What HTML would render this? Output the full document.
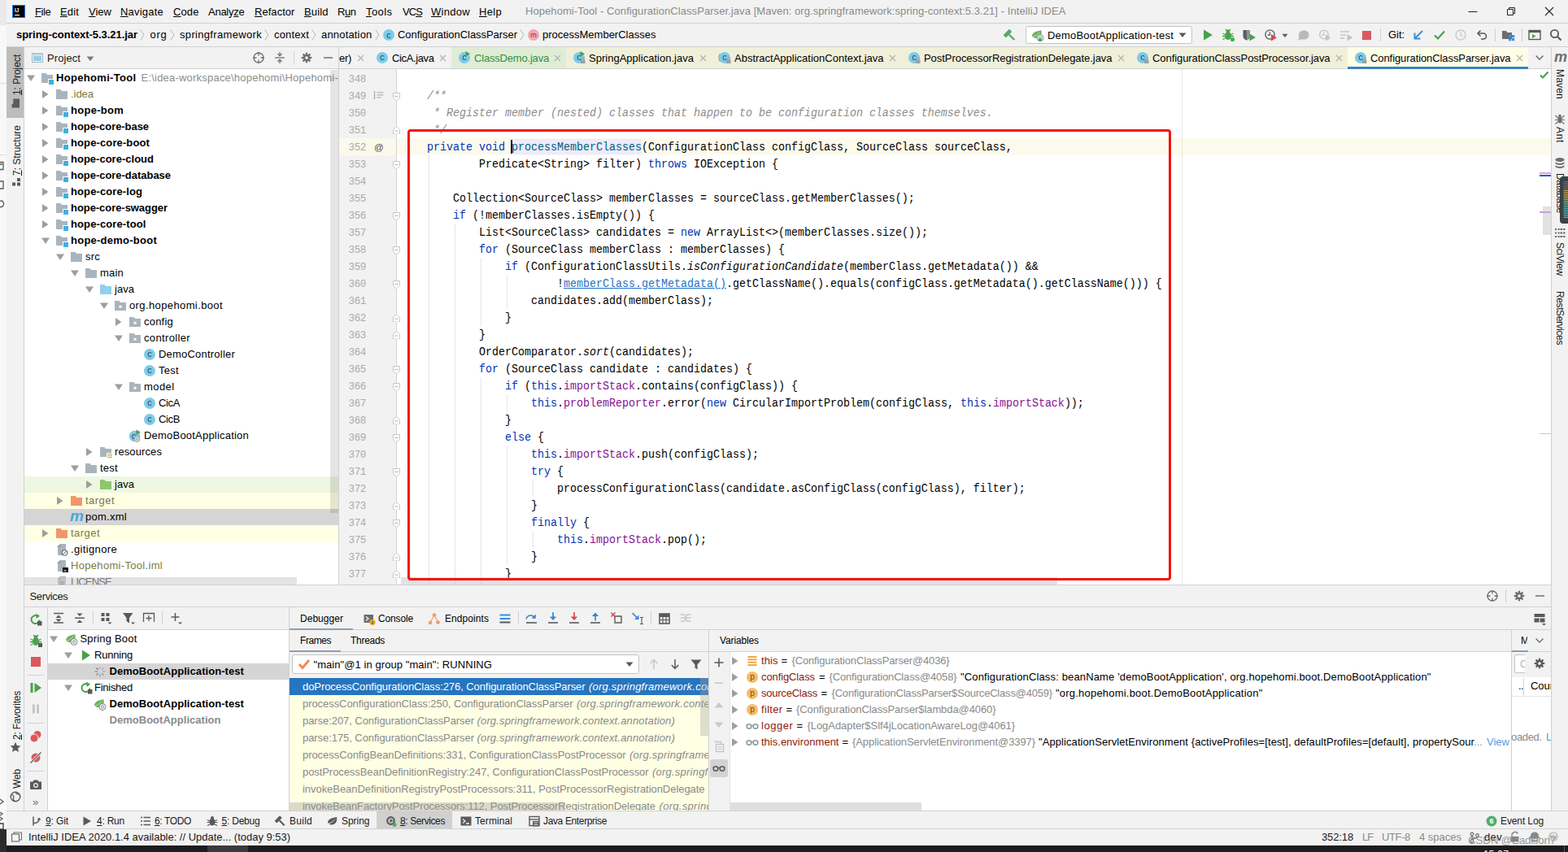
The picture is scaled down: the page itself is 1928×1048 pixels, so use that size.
<!DOCTYPE html>
<html lang="en"><head><meta charset="utf-8"><title>IntelliJ IDEA</title>
<style>
html,body{margin:0;padding:0;}
body{width:1928px;height:1048px;overflow:hidden;background:#f2f2f2;position:relative;
 font-family:"Liberation Sans","Noto Sans CJK SC",sans-serif;font-size:13px;color:#000;}
#r{position:absolute;left:0;top:0;width:1928px;height:1048px;overflow:hidden;}
#r div,#r span,#r svg,#r pre{position:absolute;}
#r span{white-space:pre;}
#r span span,#r pre span{position:static;}
.b{font-weight:bold;}
.i{font-style:italic;}
.m{font-family:"Liberation Mono",monospace;}
.u{text-decoration:underline;}
pre{margin:0;font-family:"Liberation Mono",monospace;font-size:13.333px;line-height:21px;white-space:pre;transform:scaleY(1.07);transform-origin:0 14px;}
.k{color:#0033b3;}
.f{color:#871094;}
.c{color:#8c8c8c;font-style:italic;}
</style></head>
<body><div id="r">
<div style="left:0px;top:0px;width:8px;height:31px;background:#e9e9e9;"></div>
<div style="left:0px;top:31px;width:8px;height:989px;background:#f8f8f8;"></div>
<div style="left:0px;top:102px;width:8px;height:1px;background:#dcdcdc;"></div>
<div style="left:0px;top:190px;width:8px;height:1px;background:#dcdcdc;"></div>
<div style="left:0px;top:1020px;width:8px;height:28px;background:#2b2b2b;"></div>
<div style="left:8px;top:0px;width:1920px;height:28px;background:#f2f2f2;"></div>
<div style="left:8px;top:28px;width:1920px;height:1px;background:#d1d1d1;"></div>
<div style="left:8px;top:29px;width:1920px;height:28px;background:#f2f2f2;"></div>
<div style="left:8px;top:57px;width:1920px;height:1px;background:#d1d1d1;"></div>
<div style="left:8px;top:58px;width:21px;height:940px;background:#f2f2f2;"></div>
<div style="left:29px;top:58px;width:1px;height:940px;background:#d1d1d1;"></div>
<div style="left:8px;top:58px;width:21px;height:87px;background:#bdbdbd;"></div>
<div style="left:30px;top:58px;width:386px;height:27px;background:#f2f2f2;"></div>
<div style="left:30px;top:84px;width:386px;height:1px;background:#d1d1d1;"></div>
<div style="left:30px;top:85px;width:386px;height:634px;background:#fff;"></div>
<div style="left:416px;top:58px;width:1px;height:660px;background:#d1d1d1;"></div>
<div style="left:417px;top:58px;width:1490px;height:26px;background:#f2f2f2;"></div>
<div style="left:417px;top:84px;width:1490px;height:1px;background:#d1d1d1;"></div>
<div style="left:417px;top:85px;width:1490px;height:634px;background:#fff;"></div>
<div style="left:417px;top:85px;width:71px;height:634px;background:#f2f2f2;"></div>
<div style="left:487px;top:85px;width:1px;height:634px;background:#dedede;"></div>
<div style="left:1907px;top:58px;width:21px;height:940px;background:#f2f2f2;"></div>
<div style="left:1907px;top:58px;width:1px;height:940px;background:#d1d1d1;"></div>
<div style="left:30px;top:719px;width:1877px;height:1px;background:#d1d1d1;"></div>
<div style="left:30px;top:719px;width:1877px;height:27px;background:#f2f2f2;"></div>
<div style="left:30px;top:746px;width:1877px;height:1px;background:#d1d1d1;"></div>
<div style="left:30px;top:747px;width:28px;height:251px;background:#f2f2f2;"></div>
<div style="left:58px;top:747px;width:1px;height:251px;background:#d1d1d1;"></div>
<div style="left:59px;top:747px;width:296px;height:27px;background:#f2f2f2;"></div>
<div style="left:59px;top:774px;width:296px;height:1px;background:#d1d1d1;"></div>
<div style="left:59px;top:775px;width:296px;height:222px;background:#fff;"></div>
<div style="left:355px;top:747px;width:1px;height:251px;background:#d1d1d1;"></div>
<div style="left:356px;top:747px;width:1551px;height:27px;background:#f2f2f2;"></div>
<div style="left:356px;top:774px;width:1551px;height:1px;background:#d1d1d1;"></div>
<div style="left:356px;top:775px;width:1551px;height:26px;background:#f2f2f2;"></div>
<div style="left:356px;top:801px;width:1551px;height:1px;background:#d1d1d1;"></div>
<div style="left:356px;top:802px;width:515px;height:32px;background:#f2f2f2;"></div>
<div style="left:356px;top:834px;width:515px;height:163px;background:#ffffe4;"></div>
<div style="left:871px;top:775px;width:1px;height:222px;background:#d1d1d1;"></div>
<div style="left:872px;top:802px;width:25px;height:195px;background:#f2f2f2;"></div>
<div style="left:897px;top:802px;width:1px;height:195px;background:#e3e3e3;"></div>
<div style="left:898px;top:802px;width:960px;height:195px;background:#fff;"></div>
<div style="left:1858px;top:775px;width:1px;height:222px;background:#d1d1d1;"></div>
<div style="left:1859px;top:802px;width:48px;height:195px;background:#fff;"></div>
<div style="left:1859px;top:802px;width:48px;height:31px;background:#f2f2f2;"></div>
<div style="left:8px;top:997px;width:1920px;height:1px;background:#d1d1d1;"></div>
<div style="left:8px;top:998px;width:1920px;height:21px;background:#f2f2f2;"></div>
<div style="left:8px;top:1019px;width:1920px;height:1px;background:#d1d1d1;"></div>
<div style="left:8px;top:1020px;width:1920px;height:20px;background:#f2f2f2;"></div>
<div style="left:0px;top:1040px;width:1928px;height:8px;background:#1c1c1c;"></div>
<div style="left:255px;top:1040px;width:50px;height:8px;background:#3a3a3a;"></div>
<div style="left:15px;top:6px;width:16px;height:16px;background:#000;border:1px solid #087cfa;box-sizing:border-box;"></div>
<svg style="left:15px;top:6px;" width="16" height="16" viewBox="0 0 16 16"><text x="3" y="8.500" font-family="Liberation Sans,sans-serif" font-size="6.500" font-weight="bold" fill="#fff">IJ</text><rect x="3" y="12" width="6" height="1.200" fill="#fff"/></svg>
<span style="left:43px;top:5.5px;line-height:18px;letter-spacing:-0.367px;"><span class="u">F</span>ile</span>
<span style="left:74px;top:5.5px;line-height:18px;letter-spacing:0.148px;"><span class="u">E</span>dit</span>
<span style="left:109px;top:5.5px;line-height:18px;letter-spacing:0.012px;"><span class="u">V</span>iew</span>
<span style="left:148px;top:5.5px;line-height:18px;letter-spacing:0.211px;"><span class="u">N</span>avigate</span>
<span style="left:213px;top:5.5px;line-height:18px;letter-spacing:0.102px;"><span class="u">C</span>ode</span>
<span style="left:256px;top:5.5px;line-height:18px;letter-spacing:-0.252px;">Analy<span class="u">z</span>e</span>
<span style="left:313px;top:5.5px;line-height:18px;letter-spacing:0.045px;"><span class="u">R</span>efactor</span>
<span style="left:374px;top:5.5px;line-height:18px;letter-spacing:0.116px;"><span class="u">B</span>uild</span>
<span style="left:415px;top:5.5px;line-height:18px;letter-spacing:-0.453px;">R<span class="u">u</span>n</span>
<span style="left:450px;top:5.5px;line-height:18px;letter-spacing:0.428px;"><span class="u">T</span>ools</span>
<span style="left:495px;top:5.5px;line-height:18px;letter-spacing:-0.911px;">VC<span class="u">S</span></span>
<span style="left:530px;top:5.5px;line-height:18px;letter-spacing:0.292px;"><span class="u">W</span>indow</span>
<span style="left:589px;top:5.5px;line-height:18px;letter-spacing:0.312px;"><span class="u">H</span>elp</span>
<span style="left:646px;top:5px;line-height:18px;color:#8a8a8a;letter-spacing:0.069px;">Hopehomi-Tool - ConfigurationClassParser.java [Maven: org.springframework:spring-context:5.3.21] - IntelliJ IDEA</span>
<svg style="left:1805px;top:8px;" width="12" height="12" viewBox="0 0 12 12"><path d="M0.5 6.5h11" stroke="#222" stroke-width="1" fill="none"/></svg>
<svg style="left:1852px;top:8px;" width="12" height="12" viewBox="0 0 12 12"><path d="M1.5 3.5h7v7h-7z M3.5 3.5v-2h7v7h-2" stroke="#222" stroke-width="1" fill="none"/></svg>
<svg style="left:1899px;top:8px;" width="12" height="12" viewBox="0 0 12 12"><path d="M1 1l10 10M11 1L1 11" stroke="#222" stroke-width="1.1" fill="none"/></svg>
<span class="b" style="left:20px;top:33.5px;line-height:18px;letter-spacing:-0.051px;">spring-context-5.3.21.jar</span>
<svg style="left:172px;top:35px;" width="6" height="16" viewBox="0 0 6 16"><path d="M0.7 1.5L5 8L0.7 14.5" stroke="#b4b4b4" stroke-width="1" fill="none"/></svg>
<span style="left:184.5px;top:33.5px;line-height:18px;letter-spacing:0.734px;">org</span>
<svg style="left:209px;top:35px;" width="6" height="16" viewBox="0 0 6 16"><path d="M0.7 1.5L5 8L0.7 14.5" stroke="#b4b4b4" stroke-width="1" fill="none"/></svg>
<span style="left:221px;top:33.5px;line-height:18px;letter-spacing:0.327px;">springframework</span>
<svg style="left:325px;top:35px;" width="6" height="16" viewBox="0 0 6 16"><path d="M0.7 1.5L5 8L0.7 14.5" stroke="#b4b4b4" stroke-width="1" fill="none"/></svg>
<span style="left:337px;top:33.5px;line-height:18px;letter-spacing:0.154px;">context</span>
<svg style="left:383px;top:35px;" width="6" height="16" viewBox="0 0 6 16"><path d="M0.7 1.5L5 8L0.7 14.5" stroke="#b4b4b4" stroke-width="1" fill="none"/></svg>
<span style="left:395px;top:33.5px;line-height:18px;letter-spacing:0.177px;">annotation</span>
<svg style="left:461px;top:35px;" width="6" height="16" viewBox="0 0 6 16"><path d="M0.7 1.5L5 8L0.7 14.5" stroke="#b4b4b4" stroke-width="1" fill="none"/></svg>
<svg style="left:470px;top:34.5px;" width="16" height="16" viewBox="0 0 16 16"><circle cx="8" cy="8" r="7" fill="#7ecbe8"/><text x="8" y="11.6" font-family="Liberation Sans,sans-serif" font-size="11" text-anchor="middle" fill="#2c4a58">c</text></svg>
<span style="left:489px;top:33.5px;line-height:18px;letter-spacing:-0.047px;">ConfigurationClassParser</span>
<svg style="left:639px;top:35px;" width="6" height="16" viewBox="0 0 6 16"><path d="M0.7 1.5L5 8L0.7 14.5" stroke="#b4b4b4" stroke-width="1" fill="none"/></svg>
<svg style="left:648px;top:34.5px;" width="16" height="16" viewBox="0 0 16 16"><circle cx="8" cy="8" r="7" fill="#f4a7b4"/><text x="8" y="11.0" font-family="Liberation Sans,sans-serif" font-size="9" text-anchor="middle" fill="#8a2f3f">m</text></svg>
<span style="left:667px;top:33.5px;line-height:18px;">processMemberClasses</span>
<svg style="left:1233px;top:34px;" width="18" height="18" viewBox="0 0 18 18"><g transform="rotate(-45 9 9)"><rect x="3" y="3.2" width="10.5" height="4.6" rx="0.8" fill="#59a869"/><rect x="7.3" y="7.8" width="2.4" height="9.2" fill="#59a869"/></g></svg>
<div style="left:1261px;top:32px;width:205px;height:22px;background:#fff;border:1px solid #c4c4c4;border-radius:3px;box-sizing:border-box;"></div>
<svg style="left:1268px;top:35px;" width="16" height="16" viewBox="0 0 16 16"><path d="M1 9.5C1.5 5 6 3.2 12.5 2.2C13.2 6.5 12 11.5 7 12C4.5 12.2 2.5 11.5 1 9.5z" fill="#6cb35a"/><path d="M2 10.5C5 9.5 8 7.5 10.5 4.5" stroke="#fff" stroke-width="0.8" fill="none" opacity="0.7"/><circle cx="11" cy="11.5" r="4" fill="#f2f2f2" stroke="#7f8b91" stroke-width="1"/><circle cx="11" cy="11.5" r="1.6" fill="none" stroke="#7f8b91" stroke-width="0.9"/></svg>
<svg style="left:1276px;top:46px;" width="6" height="6" viewBox="0 0 6 6"><circle cx="3" cy="3" r="2.2" fill="#3bb54a"/></svg>
<span style="left:1288px;top:35px;line-height:18px;letter-spacing:0.195px;">DemoBootApplication-test</span>
<svg style="left:1449px;top:39px;" width="10" height="8" viewBox="0 0 10 8"><path d="M0.5 1.5h9L5 7z" fill="#5a5a5a"/></svg>
<svg style="left:1477px;top:35px;" width="16" height="16" viewBox="0 0 16 16"><path d="M3 1.5v13l11-6.5z" fill="#4aa14a"/></svg>
<svg style="left:1502px;top:35px;" width="16" height="16" viewBox="0 0 16 16"><ellipse cx="8" cy="9" rx="4" ry="5" fill="#4aa14a"/><circle cx="8" cy="3.6" r="2.3" fill="#4aa14a"/><path d="M1.5 6l3 1.5M14.5 6l-3 1.5M1 9.5h3.5M15 9.5h-3.5M1.5 13.5l3-1.5M14.5 13.5l-3-1.5M5 1l1.5 1.8M11 1L9.5 2.8" stroke="#4aa14a" stroke-width="1.3" fill="none"/></svg>
<svg style="left:1512px;top:45px;" width="7" height="7" viewBox="0 0 7 7"><circle cx="3.5" cy="3.5" r="2.6" fill="#3bb54a"/></svg>
<svg style="left:1527px;top:35px;" width="18" height="16" viewBox="0 0 18 16"><path d="M1.5 2h8.5v8c0 2-2 3.5-4.2 4.5C3.5 13.5 1.5 12 1.5 10z" fill="#5a5f64"/><path d="M6 2h4v8c0 2-1.7 3.5-4 4.5z" fill="#8d9398"/><path d="M9.5 6.5v9l7.5-4.5z" fill="#4aa14a"/></svg>
<svg style="left:1554px;top:35px;" width="18" height="16" viewBox="0 0 18 16"><circle cx="7.5" cy="7.5" r="5.6" fill="none" stroke="#6e6e6e" stroke-width="1.5"/><path d="M7.5 4v4h-3" stroke="#6e6e6e" stroke-width="1.4" fill="none"/><path d="M9 7v8.5l7-4.2z" fill="#e0434f"/></svg>
<svg style="left:1576px;top:41px;" width="8" height="6" viewBox="0 0 8 6"><path d="M0.5 0.8h7L4 5z" fill="#5a5a5a"/></svg>
<svg style="left:1594px;top:35px;" width="18" height="16" viewBox="0 0 18 16"><path d="M3 8c0-3 2-5.5 6-5.5c4 0 6.5 2 6.5 5.5c0 3.500-3 5.500-6.500 5.500H5l-3 1.500l1.200-3C3 11 3 9.500 3 8z" fill="#b9b9b9"/></svg>
<svg style="left:1621px;top:35px;" width="18" height="16" viewBox="0 0 18 16"><circle cx="7" cy="7.500" r="5.300" fill="none" stroke="#c9c9c9" stroke-width="1.500"/><path d="M7 4.500v3.500h-2.500" stroke="#c9c9c9" stroke-width="1.300" fill="none"/><path d="M9 7.500v8l6.500-4z" fill="#c4c4c4"/></svg>
<svg style="left:1647px;top:35px;" width="18" height="16" viewBox="0 0 18 16"><path d="M1 4h11M1 8h7M1 12h5" stroke="#c4c4c4" stroke-width="1.600" fill="none"/><path d="M9.500 7v8.500l7-4.200z" fill="#c4c4c4"/></svg>
<div style="left:1675px;top:38px;width:11px;height:11px;background:#db5860;"></div>
<div style="left:1697px;top:35px;width:1px;height:16px;background:#cfcfcf;"></div>
<span style="left:1707px;top:33.5px;line-height:18px;letter-spacing:-0.059px;">Git:</span>
<svg style="left:1736px;top:35px;" width="16" height="16" viewBox="0 0 16 16"><path d="M13 3L4 12M3.500 5.500v7h7" stroke="#3d8ed6" stroke-width="2" fill="none"/></svg>
<svg style="left:1762px;top:35px;" width="16" height="16" viewBox="0 0 16 16"><path d="M2 8.500l4 4l8-9" stroke="#4aa14a" stroke-width="2.200" fill="none"/></svg>
<svg style="left:1788px;top:35px;" width="16" height="16" viewBox="0 0 16 16"><circle cx="8" cy="8" r="6" fill="none" stroke="#c9c9c9" stroke-width="1.400"/><path d="M8 4.500v4l2.500 1.500" stroke="#c9c9c9" stroke-width="1.300" fill="none"/></svg>
<svg style="left:1814px;top:35px;" width="16" height="16" viewBox="0 0 16 16"><path d="M3 6h7a3.500 3.500 0 0 1 0 7H7" stroke="#5a5a5a" stroke-width="1.600" fill="none"/><path d="M6.500 2.500L3 6l3.500 3.500" stroke="#5a5a5a" stroke-width="1.600" fill="none"/></svg>
<div style="left:1838px;top:35px;width:1px;height:16px;background:#cfcfcf;"></div>
<svg style="left:1846px;top:35px;" width="18" height="16" viewBox="0 0 18 16"><path d="M1 3h5l1.500 2H13v8H1z" fill="#6e6e6e"/><rect x="9" y="8" width="3.200" height="3.200" fill="#3d8ed6"/><rect x="13" y="8" width="3.200" height="3.200" fill="#3d8ed6"/><rect x="9" y="12" width="3.200" height="3.200" fill="#3d8ed6"/><rect x="13" y="12" width="3.200" height="3.200" fill="#3d8ed6"/></svg>
<div style="left:1871px;top:35px;width:1px;height:16px;background:#cfcfcf;"></div>
<svg style="left:1879px;top:35px;" width="16" height="16" viewBox="0 0 16 16"><rect x="1" y="2.500" width="14" height="11" fill="none" stroke="#5a5a5a" stroke-width="1.400"/><rect x="1" y="2.500" width="14" height="2.600" fill="#5a5a5a"/><path d="M5 7v5l4.500-2.500z" fill="#4aa14a"/></svg>
<svg style="left:1905px;top:35px;" width="16" height="16" viewBox="0 0 16 16"><circle cx="6.500" cy="6.500" r="4.600" fill="none" stroke="#5a5a5a" stroke-width="1.800"/><path d="M10 10l4.500 4.500" stroke="#5a5a5a" stroke-width="2.200" fill="none"/></svg>
<svg style="left:38px;top:63px;" width="16" height="16" viewBox="0 0 16 16"><rect x="1.500" y="2.500" width="13" height="11" fill="#f4f7f9" stroke="#aab4bc" stroke-width="1"/><rect x="1" y="2" width="14" height="2.500" fill="#bcc5cc"/><rect x="3" y="5.500" width="10" height="6.500" fill="#8fd1ec"/></svg>
<span style="left:58px;top:63px;line-height:18px;color:#1a1a1a;letter-spacing:0.076px;">Project</span>
<svg style="left:106px;top:68px;" width="10" height="8" viewBox="0 0 10 8"><path d="M0.500 1.500h9L5 7z" fill="#7a7a7a"/></svg>
<svg style="left:310px;top:63px;" width="16" height="16" viewBox="0 0 16 16"><circle cx="8" cy="8" r="6" fill="none" stroke="#6e6e6e" stroke-width="1.300"/><path d="M8 1v4.500M8 10.500V15M1 8h4.500M10.500 8H15" stroke="#6e6e6e" stroke-width="1.300"/></svg>
<svg style="left:336px;top:63px;" width="16" height="16" viewBox="0 0 16 16"><path d="M2 8h12" stroke="#6e6e6e" stroke-width="1.300"/><path d="M8 1v4M5.500 3.200L8 5.700l2.500-2.500M8 15v-4M5.500 12.800L8 10.300l2.500 2.500" stroke="#6e6e6e" stroke-width="1.300" fill="none"/></svg>
<div style="left:361px;top:63px;width:1px;height:16px;background:#cfcfcf;"></div>
<svg style="left:370px;top:64px;" width="14" height="14" viewBox="0 0 16 16"><rect x="6.700" y="0.800" width="2.600" height="3.400" fill="#6e6e6e" transform="rotate(0 8 8)"/><rect x="6.700" y="0.800" width="2.600" height="3.400" fill="#6e6e6e" transform="rotate(45 8 8)"/><rect x="6.700" y="0.800" width="2.600" height="3.400" fill="#6e6e6e" transform="rotate(90 8 8)"/><rect x="6.700" y="0.800" width="2.600" height="3.400" fill="#6e6e6e" transform="rotate(135 8 8)"/><rect x="6.700" y="0.800" width="2.600" height="3.400" fill="#6e6e6e" transform="rotate(180 8 8)"/><rect x="6.700" y="0.800" width="2.600" height="3.400" fill="#6e6e6e" transform="rotate(225 8 8)"/><rect x="6.700" y="0.800" width="2.600" height="3.400" fill="#6e6e6e" transform="rotate(270 8 8)"/><rect x="6.700" y="0.800" width="2.600" height="3.400" fill="#6e6e6e" transform="rotate(315 8 8)"/><circle cx="8" cy="8" r="4.900" fill="#6e6e6e"/><circle cx="8" cy="8" r="2.100" fill="#f2f2f2"/></svg>
<svg style="left:396px;top:63px;" width="16" height="16" viewBox="0 0 16 16"><path d="M2 8h11" stroke="#6e6e6e" stroke-width="1.500"/></svg>
<svg style="left:31.5px;top:91px;" width="12" height="10" viewBox="0 0 12 10"><path d="M1 1.500h10L6 9z" fill="#9e9e9e"/></svg>
<svg style="left:50px;top:88px;" width="16" height="16" viewBox="0 0 16 16"><path d="M1 2h5.500l1.500 2H15v5H9v5H1z" fill="#aab4bc"/><rect x="10" y="10" width="6" height="6" fill="#3fb0e0"/></svg>
<span class="b" style="left:69px;top:87px;line-height:18px;letter-spacing:0.319px;">Hopehomi-Tool</span>
<span style="left:173.5px;top:87px;line-height:18px;color:#8c8c8c;letter-spacing:0.212px;">E:\idea-workspace\hopehomi\Hopehomi-</span>
<svg style="left:51px;top:110px;" width="10" height="12" viewBox="0 0 10 12"><path d="M1 1l7.500 5L1 11z" fill="#9e9e9e"/></svg>
<svg style="left:68px;top:108px;" width="16" height="16" viewBox="0 0 16 16"><path d="M1 2h5.500l1.500 2H15v10H1z" fill="#aab4bc"/></svg>
<span style="left:87px;top:107px;line-height:18px;color:#7a7a3f;letter-spacing:-0.041px;">.idea</span>
<svg style="left:51px;top:130px;" width="10" height="12" viewBox="0 0 10 12"><path d="M1 1l7.500 5L1 11z" fill="#9e9e9e"/></svg>
<svg style="left:68px;top:128px;" width="16" height="16" viewBox="0 0 16 16"><path d="M1 2h5.500l1.500 2H15v5H9v5H1z" fill="#aab4bc"/><rect x="10" y="10" width="6" height="6" fill="#3fb0e0"/></svg>
<span class="b" style="left:87px;top:127px;line-height:18px;letter-spacing:0.271px;">hope-bom</span>
<svg style="left:51px;top:150px;" width="10" height="12" viewBox="0 0 10 12"><path d="M1 1l7.500 5L1 11z" fill="#9e9e9e"/></svg>
<svg style="left:68px;top:148px;" width="16" height="16" viewBox="0 0 16 16"><path d="M1 2h5.500l1.500 2H15v5H9v5H1z" fill="#aab4bc"/><rect x="10" y="10" width="6" height="6" fill="#3fb0e0"/></svg>
<span class="b" style="left:87px;top:147px;line-height:18px;letter-spacing:-0.058px;">hope-core-base</span>
<svg style="left:51px;top:170px;" width="10" height="12" viewBox="0 0 10 12"><path d="M1 1l7.500 5L1 11z" fill="#9e9e9e"/></svg>
<svg style="left:68px;top:168px;" width="16" height="16" viewBox="0 0 16 16"><path d="M1 2h5.500l1.500 2H15v5H9v5H1z" fill="#aab4bc"/><rect x="10" y="10" width="6" height="6" fill="#3fb0e0"/></svg>
<span class="b" style="left:87px;top:167px;line-height:18px;letter-spacing:0.119px;">hope-core-boot</span>
<svg style="left:51px;top:190px;" width="10" height="12" viewBox="0 0 10 12"><path d="M1 1l7.500 5L1 11z" fill="#9e9e9e"/></svg>
<svg style="left:68px;top:188px;" width="16" height="16" viewBox="0 0 16 16"><path d="M1 2h5.500l1.500 2H15v5H9v5H1z" fill="#aab4bc"/><rect x="10" y="10" width="6" height="6" fill="#3fb0e0"/></svg>
<span class="b" style="left:87px;top:187px;line-height:18px;letter-spacing:0.010px;">hope-core-cloud</span>
<svg style="left:51px;top:210px;" width="10" height="12" viewBox="0 0 10 12"><path d="M1 1l7.500 5L1 11z" fill="#9e9e9e"/></svg>
<svg style="left:68px;top:208px;" width="16" height="16" viewBox="0 0 16 16"><path d="M1 2h5.500l1.500 2H15v5H9v5H1z" fill="#aab4bc"/><rect x="10" y="10" width="6" height="6" fill="#3fb0e0"/></svg>
<span class="b" style="left:87px;top:207px;line-height:18px;letter-spacing:-0.030px;">hope-core-database</span>
<svg style="left:51px;top:230px;" width="10" height="12" viewBox="0 0 10 12"><path d="M1 1l7.500 5L1 11z" fill="#9e9e9e"/></svg>
<svg style="left:68px;top:228px;" width="16" height="16" viewBox="0 0 16 16"><path d="M1 2h5.500l1.500 2H15v5H9v5H1z" fill="#aab4bc"/><rect x="10" y="10" width="6" height="6" fill="#3fb0e0"/></svg>
<span class="b" style="left:87px;top:227px;line-height:18px;letter-spacing:0.102px;">hope-core-log</span>
<svg style="left:51px;top:250px;" width="10" height="12" viewBox="0 0 10 12"><path d="M1 1l7.500 5L1 11z" fill="#9e9e9e"/></svg>
<svg style="left:68px;top:248px;" width="16" height="16" viewBox="0 0 16 16"><path d="M1 2h5.500l1.500 2H15v5H9v5H1z" fill="#aab4bc"/><rect x="10" y="10" width="6" height="6" fill="#3fb0e0"/></svg>
<span class="b" style="left:87px;top:247px;line-height:18px;letter-spacing:-0.054px;">hope-core-swagger</span>
<svg style="left:51px;top:270px;" width="10" height="12" viewBox="0 0 10 12"><path d="M1 1l7.500 5L1 11z" fill="#9e9e9e"/></svg>
<svg style="left:68px;top:268px;" width="16" height="16" viewBox="0 0 16 16"><path d="M1 2h5.500l1.500 2H15v5H9v5H1z" fill="#aab4bc"/><rect x="10" y="10" width="6" height="6" fill="#3fb0e0"/></svg>
<span class="b" style="left:87px;top:267px;line-height:18px;letter-spacing:0.107px;">hope-core-tool</span>
<svg style="left:49.5px;top:291px;" width="12" height="10" viewBox="0 0 12 10"><path d="M1 1.500h10L6 9z" fill="#9e9e9e"/></svg>
<svg style="left:68px;top:288px;" width="16" height="16" viewBox="0 0 16 16"><path d="M1 2h5.500l1.500 2H15v5H9v5H1z" fill="#aab4bc"/><rect x="10" y="10" width="6" height="6" fill="#3fb0e0"/></svg>
<span class="b" style="left:87px;top:287px;line-height:18px;letter-spacing:0.247px;">hope-demo-boot</span>
<svg style="left:67.5px;top:311px;" width="12" height="10" viewBox="0 0 12 10"><path d="M1 1.500h10L6 9z" fill="#9e9e9e"/></svg>
<svg style="left:86px;top:308px;" width="16" height="16" viewBox="0 0 16 16"><path d="M1 2h5.500l1.500 2H15v10H1z" fill="#aab4bc"/></svg>
<span style="left:105px;top:307px;line-height:18px;letter-spacing:0.219px;">src</span>
<svg style="left:85.5px;top:331px;" width="12" height="10" viewBox="0 0 12 10"><path d="M1 1.500h10L6 9z" fill="#9e9e9e"/></svg>
<svg style="left:104px;top:328px;" width="16" height="16" viewBox="0 0 16 16"><path d="M1 2h5.500l1.500 2H15v10H1z" fill="#aab4bc"/></svg>
<span style="left:123px;top:327px;line-height:18px;letter-spacing:0.203px;">main</span>
<svg style="left:103.5px;top:351px;" width="12" height="10" viewBox="0 0 12 10"><path d="M1 1.500h10L6 9z" fill="#9e9e9e"/></svg>
<svg style="left:122px;top:348px;" width="16" height="16" viewBox="0 0 16 16"><path d="M1 2h5.500l1.500 2H15v10H1z" fill="#8fd1ec"/></svg>
<span style="left:141px;top:347px;line-height:18px;letter-spacing:0.035px;">java</span>
<svg style="left:121.5px;top:371px;" width="12" height="10" viewBox="0 0 12 10"><path d="M1 1.500h10L6 9z" fill="#9e9e9e"/></svg>
<svg style="left:140px;top:368px;" width="16" height="16" viewBox="0 0 16 16"><path d="M1 2h5.500l1.500 2H15v10H1z" fill="#aab4bc"/><circle cx="8" cy="9.300" r="1.800" fill="#f4f6f7"/></svg>
<span style="left:159px;top:367px;line-height:18px;letter-spacing:0.387px;">org.hopehomi.boot</span>
<svg style="left:141px;top:390px;" width="10" height="12" viewBox="0 0 10 12"><path d="M1 1l7.500 5L1 11z" fill="#9e9e9e"/></svg>
<svg style="left:158px;top:388px;" width="16" height="16" viewBox="0 0 16 16"><path d="M1 2h5.500l1.500 2H15v10H1z" fill="#aab4bc"/><circle cx="8" cy="9.300" r="1.800" fill="#f4f6f7"/></svg>
<span style="left:177px;top:387px;line-height:18px;letter-spacing:0.216px;">config</span>
<svg style="left:139.5px;top:411px;" width="12" height="10" viewBox="0 0 12 10"><path d="M1 1.500h10L6 9z" fill="#9e9e9e"/></svg>
<svg style="left:158px;top:408px;" width="16" height="16" viewBox="0 0 16 16"><path d="M1 2h5.500l1.500 2H15v10H1z" fill="#aab4bc"/><circle cx="8" cy="9.300" r="1.800" fill="#f4f6f7"/></svg>
<span style="left:177px;top:407px;line-height:18px;letter-spacing:0.353px;">controller</span>
<svg style="left:176px;top:428px;" width="16" height="16" viewBox="0 0 16 16"><circle cx="8" cy="8" r="7" fill="#7ecbe8"/><text x="8" y="11.200" font-family="Liberation Sans,sans-serif" font-size="11" text-anchor="middle" fill="#2c4a58">c</text></svg>
<span style="left:195px;top:427px;line-height:18px;letter-spacing:0.211px;">DemoController</span>
<svg style="left:176px;top:448px;" width="16" height="16" viewBox="0 0 16 16"><circle cx="8" cy="8" r="7" fill="#7ecbe8"/><text x="8" y="11.200" font-family="Liberation Sans,sans-serif" font-size="11" text-anchor="middle" fill="#2c4a58">c</text></svg>
<span style="left:195px;top:447px;line-height:18px;letter-spacing:0.289px;">Test</span>
<svg style="left:139.5px;top:471px;" width="12" height="10" viewBox="0 0 12 10"><path d="M1 1.500h10L6 9z" fill="#9e9e9e"/></svg>
<svg style="left:158px;top:468px;" width="16" height="16" viewBox="0 0 16 16"><path d="M1 2h5.500l1.500 2H15v10H1z" fill="#aab4bc"/><circle cx="8" cy="9.300" r="1.800" fill="#f4f6f7"/></svg>
<span style="left:177px;top:467px;line-height:18px;letter-spacing:0.416px;">model</span>
<svg style="left:176px;top:488px;" width="16" height="16" viewBox="0 0 16 16"><circle cx="8" cy="8" r="7" fill="#7ecbe8"/><text x="8" y="11.200" font-family="Liberation Sans,sans-serif" font-size="11" text-anchor="middle" fill="#2c4a58">c</text></svg>
<span style="left:195px;top:487px;line-height:18px;letter-spacing:-0.363px;">CicA</span>
<svg style="left:176px;top:508px;" width="16" height="16" viewBox="0 0 16 16"><circle cx="8" cy="8" r="7" fill="#7ecbe8"/><text x="8" y="11.200" font-family="Liberation Sans,sans-serif" font-size="11" text-anchor="middle" fill="#2c4a58">c</text></svg>
<span style="left:195px;top:507px;line-height:18px;letter-spacing:-0.363px;">CicB</span>
<svg style="left:158px;top:528px;" width="16" height="16" viewBox="0 0 16 16"><circle cx="7.500" cy="8.500" r="6.800" fill="#7ecbe8"/><text x="6.500" y="11.500" font-family="Liberation Sans,sans-serif" font-size="11" text-anchor="middle" fill="#2c4a58">c</text><path d="M9.500 0.500v6.500l5.500-3.200z" fill="#4aa14a"/><circle cx="10.500" cy="12" r="3.400" fill="#e8eaeb" stroke="#7f8b91" stroke-width="0.900"/><circle cx="10.500" cy="12" r="1.300" fill="none" stroke="#7f8b91" stroke-width="0.800"/></svg>
<span style="left:177px;top:527px;line-height:18px;letter-spacing:0.209px;">DemoBootApplication</span>
<svg style="left:105px;top:550px;" width="10" height="12" viewBox="0 0 10 12"><path d="M1 1l7.500 5L1 11z" fill="#9e9e9e"/></svg>
<svg style="left:122px;top:548px;" width="16" height="16" viewBox="0 0 16 16"><path d="M1 2h5.500l1.500 2H15v5H9v5H1z" fill="#aab4bc"/><path d="M10 10.500h6M10 12.500h6M10 14.500h6" stroke="#e0a030" stroke-width="1.100"/></svg>
<span style="left:141px;top:547px;line-height:18px;letter-spacing:0.102px;">resources</span>
<svg style="left:85.5px;top:571px;" width="12" height="10" viewBox="0 0 12 10"><path d="M1 1.500h10L6 9z" fill="#9e9e9e"/></svg>
<svg style="left:104px;top:568px;" width="16" height="16" viewBox="0 0 16 16"><path d="M1 2h5.500l1.500 2H15v10H1z" fill="#aab4bc"/></svg>
<span style="left:123px;top:567px;line-height:18px;letter-spacing:0.258px;">test</span>
<div style="left:30px;top:586px;width:386px;height:20px;background:#edf7e1;"></div>
<svg style="left:105px;top:590px;" width="10" height="12" viewBox="0 0 10 12"><path d="M1 1l7.500 5L1 11z" fill="#9e9e9e"/></svg>
<svg style="left:122px;top:588px;" width="16" height="16" viewBox="0 0 16 16"><path d="M1 2h5.500l1.500 2H15v10H1z" fill="#8cc66f"/></svg>
<span style="left:141px;top:587px;line-height:18px;letter-spacing:0.035px;">java</span>
<div style="left:30px;top:606px;width:386px;height:20px;background:#ffffe4;"></div>
<svg style="left:69px;top:610px;" width="10" height="12" viewBox="0 0 10 12"><path d="M1 1l7.500 5L1 11z" fill="#9e9e9e"/></svg>
<svg style="left:86px;top:608px;" width="16" height="16" viewBox="0 0 16 16"><path d="M1 2h5.500l1.500 2H15v10H1z" fill="#f2966a"/></svg>
<span style="left:105px;top:607px;line-height:18px;color:#7a7a3f;letter-spacing:0.458px;">target</span>
<div style="left:30px;top:626px;width:386px;height:20px;background:#d5d5d5;"></div>
<span class="b i" style="left:86px;top:625px;line-height:20px;font-size:19px;color:#4aa6dc;">m</span>
<span style="left:105px;top:627px;line-height:18px;letter-spacing:0.268px;">pom.xml</span>
<div style="left:30px;top:646px;width:386px;height:20px;background:#ffffe4;"></div>
<svg style="left:51px;top:650px;" width="10" height="12" viewBox="0 0 10 12"><path d="M1 1l7.500 5L1 11z" fill="#9e9e9e"/></svg>
<svg style="left:68px;top:648px;" width="16" height="16" viewBox="0 0 16 16"><path d="M1 2h5.500l1.500 2H15v10H1z" fill="#f2966a"/></svg>
<span style="left:87px;top:647px;line-height:18px;color:#7a7a3f;letter-spacing:0.458px;">target</span>
<svg style="left:68px;top:668px;" width="16" height="16" viewBox="0 0 16 16"><path d="M7 1h6v14H3V5z" fill="#aab4bc"/><path d="M6.500 0.500v4.500H2z" fill="#8f9aa3"/><circle cx="11.500" cy="12" r="3.500" fill="#f4f4f4" stroke="#5a5a5a" stroke-width="1"/><path d="M9.200 14.300l4.600-4.600" stroke="#5a5a5a" stroke-width="1"/></svg>
<span style="left:87px;top:667px;line-height:18px;letter-spacing:0.352px;">.gitignore</span>
<svg style="left:68px;top:688px;" width="16" height="16" viewBox="0 0 16 16"><path d="M7 1h6v14H3V5z" fill="#aab4bc"/><path d="M6.500 0.500v4.500H2z" fill="#8f9aa3"/><rect x="9" y="10" width="7" height="6" fill="#1a1a1a"/><rect x="10.500" y="13.500" width="3" height="1" fill="#fff"/></svg>
<span style="left:87px;top:687px;line-height:18px;color:#7a7a3f;letter-spacing:0.314px;">Hopehomi-Tool.iml</span>
<svg style="left:68px;top:708px;" width="16" height="16" viewBox="0 0 16 16"><path d="M7 1h6v14H3V5z" fill="#aab4bc"/><path d="M6.500 0.500v4.500H2z" fill="#8f9aa3"/><path d="M5 8h6M5 10.500h6M5 13h6" stroke="#5a5a5a" stroke-width="1"/></svg>
<span style="left:87px;top:707px;line-height:18px;letter-spacing:-0.806px;">LICENSE</span>
<div style="left:406px;top:86px;width:10px;height:545px;background:rgba(0,0,0,0.100);"></div>
<div style="left:30px;top:710px;width:335px;height:9px;background:rgba(205,205,205,0.55);"></div>
<div style="left:416px;top:58px;width:1px;height:660px;background:#d1d1d1;"></div>
<div style="left:30px;top:719px;width:387px;height:1px;background:#d1d1d1;"></div>
<div style="left:555px;top:58px;width:141px;height:26px;background:#e0edd6;"></div>
<div style="left:696px;top:58px;width:961px;height:26px;background:#f0f0da;"></div>
<div style="left:1657px;top:58px;width:222px;height:26px;background:#fefee8;"></div>
<div style="left:1657px;top:82px;width:222px;height:3px;background:#3e7fc4;"></div>
<span style="left:417px;top:62.5px;line-height:18px;letter-spacing:-0.297px;">er)</span>
<svg style="left:439px;top:67px;" width="9" height="9" viewBox="0 0 9 9"><path d="M1 1l7 7M8 1L1 8" stroke="#b0b0b0" stroke-width="1.100" fill="none"/></svg>
<svg style="left:461.5px;top:63.0px;" width="16" height="16" viewBox="0 0 16 16"><circle cx="8" cy="8" r="7" fill="#7ecbe8"/><text x="8" y="11.200" font-family="Liberation Sans,sans-serif" font-size="11" text-anchor="middle" fill="#2c4a58">c</text></svg>
<span style="left:482px;top:62.5px;line-height:18px;letter-spacing:-0.380px;">CicA.java</span>
<svg style="left:540px;top:67px;" width="9" height="9" viewBox="0 0 9 9"><path d="M1 1l7 7M8 1L1 8" stroke="#b0b0b0" stroke-width="1.100" fill="none"/></svg>
<svg style="left:562.5px;top:63.0px;" width="16" height="16" viewBox="0 0 16 16"><circle cx="8" cy="8" r="7" fill="#7ecbe8"/><text x="8" y="11.200" font-family="Liberation Sans,sans-serif" font-size="11" text-anchor="middle" fill="#2c4a58">c</text><path d="M9.500 0v6.500l5.500-3.200z" fill="#4aa14a"/></svg>
<span style="left:583px;top:62.5px;line-height:18px;color:#2f8f3f;letter-spacing:-0.190px;">ClassDemo.java</span>
<svg style="left:681px;top:67px;" width="9" height="9" viewBox="0 0 9 9"><path d="M1 1l7 7M8 1L1 8" stroke="#b0b0b0" stroke-width="1.100" fill="none"/></svg>
<svg style="left:704px;top:63.0px;" width="16" height="16" viewBox="0 0 16 16"><circle cx="8" cy="8" r="7" fill="#7ecbe8"/><text x="8" y="11.200" font-family="Liberation Sans,sans-serif" font-size="11" text-anchor="middle" fill="#2c4a58">c</text><rect x="10" y="10.500" width="5.500" height="4.500" fill="#9aa0a5"/><path d="M11.200 10.500v-1.500a1.500 1.500 0 0 1 3 0v1.500" stroke="#9aa0a5" stroke-width="1" fill="none"/><path d="M9.500 0v6.500l5.500-3.200z" fill="#4aa14a"/></svg>
<span style="left:724px;top:62.5px;line-height:18px;letter-spacing:0.016px;">SpringApplication.java</span>
<svg style="left:860px;top:67px;" width="9" height="9" viewBox="0 0 9 9"><path d="M1 1l7 7M8 1L1 8" stroke="#b0b0b0" stroke-width="1.100" fill="none"/></svg>
<svg style="left:883px;top:63.0px;" width="16" height="16" viewBox="0 0 16 16"><circle cx="8" cy="8" r="7" fill="#7ecbe8"/><text x="8" y="11.200" font-family="Liberation Sans,sans-serif" font-size="11" text-anchor="middle" fill="#2c4a58">c</text><rect x="10" y="10.500" width="5.500" height="4.500" fill="#9aa0a5"/><path d="M11.200 10.500v-1.500a1.500 1.500 0 0 1 3 0v1.500" stroke="#9aa0a5" stroke-width="1" fill="none"/><path d="M2.500 3.500A7 7 0 0 0 2.500 12.500" stroke="#9aa0a5" stroke-width="1.200" fill="none"/></svg>
<span style="left:903px;top:62.5px;line-height:18px;">AbstractApplicationContext.java</span>
<svg style="left:1093px;top:67px;" width="9" height="9" viewBox="0 0 9 9"><path d="M1 1l7 7M8 1L1 8" stroke="#b0b0b0" stroke-width="1.100" fill="none"/></svg>
<svg style="left:1115.5px;top:63.0px;" width="16" height="16" viewBox="0 0 16 16"><circle cx="8" cy="8" r="7" fill="#7ecbe8"/><text x="8" y="11.200" font-family="Liberation Sans,sans-serif" font-size="11" text-anchor="middle" fill="#2c4a58">c</text><rect x="10" y="10.500" width="5.500" height="4.500" fill="#9aa0a5"/><path d="M11.200 10.500v-1.500a1.500 1.500 0 0 1 3 0v1.500" stroke="#9aa0a5" stroke-width="1" fill="none"/></svg>
<span style="left:1136px;top:62.5px;line-height:18px;letter-spacing:-0.050px;">PostProcessorRegistrationDelegate.java</span>
<svg style="left:1374px;top:67px;" width="9" height="9" viewBox="0 0 9 9"><path d="M1 1l7 7M8 1L1 8" stroke="#b0b0b0" stroke-width="1.100" fill="none"/></svg>
<svg style="left:1396.5px;top:63.0px;" width="16" height="16" viewBox="0 0 16 16"><circle cx="8" cy="8" r="7" fill="#7ecbe8"/><text x="8" y="11.200" font-family="Liberation Sans,sans-serif" font-size="11" text-anchor="middle" fill="#2c4a58">c</text><rect x="10" y="10.500" width="5.500" height="4.500" fill="#9aa0a5"/><path d="M11.200 10.500v-1.500a1.500 1.500 0 0 1 3 0v1.500" stroke="#9aa0a5" stroke-width="1" fill="none"/></svg>
<span style="left:1417px;top:62.5px;line-height:18px;letter-spacing:-0.072px;">ConfigurationClassPostProcessor.java</span>
<svg style="left:1642px;top:67px;" width="9" height="9" viewBox="0 0 9 9"><path d="M1 1l7 7M8 1L1 8" stroke="#b0b0b0" stroke-width="1.100" fill="none"/></svg>
<svg style="left:1664.5px;top:63.0px;" width="16" height="16" viewBox="0 0 16 16"><circle cx="8" cy="8" r="7" fill="#7ecbe8"/><text x="8" y="11.200" font-family="Liberation Sans,sans-serif" font-size="11" text-anchor="middle" fill="#2c4a58">c</text><rect x="10" y="10.500" width="5.500" height="4.500" fill="#9aa0a5"/><path d="M11.200 10.500v-1.500a1.500 1.500 0 0 1 3 0v1.500" stroke="#9aa0a5" stroke-width="1" fill="none"/></svg>
<span style="left:1685px;top:62.5px;line-height:18px;letter-spacing:-0.082px;">ConfigurationClassParser.java</span>
<svg style="left:1864px;top:67px;" width="9" height="9" viewBox="0 0 9 9"><path d="M1 1l7 7M8 1L1 8" stroke="#b0b0b0" stroke-width="1.100" fill="none"/></svg>
<svg style="left:1887px;top:66px;" width="12" height="10" viewBox="0 0 12 10"><path d="M1.500 2.500L6 7l4.500-4.500" stroke="#6e6e6e" stroke-width="1.500" fill="none"/></svg>
<div style="left:417px;top:170px;width:1490px;height:21px;background:#fcfaed;"></div>
<div style="left:417px;top:170px;width:71px;height:21px;background:#fbf9ec;"></div>
<div style="left:487px;top:85px;width:1px;height:634px;background:#d4d4d4;"></div>
<div style="left:1453px;top:85px;width:1px;height:634px;background:#e8e8e8;"></div>
<div style="left:527px;top:191px;width:1px;height:546px;background:#e6e6e6;"></div>
<div style="left:559px;top:275px;width:1px;height:462px;background:#e6e6e6;"></div>
<div style="left:591px;top:317px;width:1px;height:84px;background:#e6e6e6;"></div>
<div style="left:591px;top:464px;width:1px;height:273px;background:#e6e6e6;"></div>
<div style="left:623px;top:338px;width:1px;height:42px;background:#e6e6e6;"></div>
<div style="left:623px;top:485px;width:1px;height:21px;background:#e6e6e6;"></div>
<div style="left:623px;top:548px;width:1px;height:147px;background:#e6e6e6;"></div>
<div style="left:655px;top:590px;width:1px;height:21px;background:#e6e6e6;"></div>
<div style="left:655px;top:653px;width:1px;height:21px;background:#e6e6e6;"></div>
<div style="left:629px;top:171px;width:160px;height:19px;background:#edebfc;"></div>
<div style="left:628px;top:172px;width:2px;height:17px;background:#000;"></div>
<span class="m" style="left:425px;top:88px;width:25px;text-align:right;line-height:21px;font-size:12.600px;color:#aaaaaa;letter-spacing:-0.400px;">348</span>
<span class="m" style="left:425px;top:109px;width:25px;text-align:right;line-height:21px;font-size:12.600px;color:#aaaaaa;letter-spacing:-0.400px;">349</span>
<pre style="left:493px;top:107.5px;">    <span class="c">/**</span></pre>
<span class="m" style="left:425px;top:130px;width:25px;text-align:right;line-height:21px;font-size:12.600px;color:#aaaaaa;letter-spacing:-0.400px;">350</span>
<pre style="left:493px;top:128.5px;">    <span class="c"> * Register member (nested) classes that happen to be configuration classes themselves.</span></pre>
<span class="m" style="left:425px;top:151px;width:25px;text-align:right;line-height:21px;font-size:12.600px;color:#aaaaaa;letter-spacing:-0.400px;">351</span>
<pre style="left:493px;top:149.5px;">    <span class="c"> */</span></pre>
<span class="m" style="left:425px;top:172px;width:25px;text-align:right;line-height:21px;font-size:12.600px;color:#aaaaaa;letter-spacing:-0.400px;">352</span>
<pre style="left:493px;top:170.5px;">    <span class="k">private</span> <span class="k">void</span> <span style="color:#00627a">processMemberClasses</span>(ConfigurationClass configClass, SourceClass sourceClass,</pre>
<span class="m" style="left:425px;top:193px;width:25px;text-align:right;line-height:21px;font-size:12.600px;color:#aaaaaa;letter-spacing:-0.400px;">353</span>
<pre style="left:493px;top:191.5px;">            Predicate&lt;String&gt; filter) <span class="k">throws</span> IOException {</pre>
<span class="m" style="left:425px;top:214px;width:25px;text-align:right;line-height:21px;font-size:12.600px;color:#aaaaaa;letter-spacing:-0.400px;">354</span>
<span class="m" style="left:425px;top:235px;width:25px;text-align:right;line-height:21px;font-size:12.600px;color:#aaaaaa;letter-spacing:-0.400px;">355</span>
<pre style="left:493px;top:233.5px;">        Collection&lt;SourceClass&gt; memberClasses = sourceClass.getMemberClasses();</pre>
<span class="m" style="left:425px;top:256px;width:25px;text-align:right;line-height:21px;font-size:12.600px;color:#aaaaaa;letter-spacing:-0.400px;">356</span>
<pre style="left:493px;top:254.5px;">        <span class="k">if</span> (!memberClasses.isEmpty()) {</pre>
<span class="m" style="left:425px;top:277px;width:25px;text-align:right;line-height:21px;font-size:12.600px;color:#aaaaaa;letter-spacing:-0.400px;">357</span>
<pre style="left:493px;top:275.5px;">            List&lt;SourceClass&gt; candidates = <span class="k">new</span> ArrayList&lt;&gt;(memberClasses.size());</pre>
<span class="m" style="left:425px;top:298px;width:25px;text-align:right;line-height:21px;font-size:12.600px;color:#aaaaaa;letter-spacing:-0.400px;">358</span>
<pre style="left:493px;top:296.5px;">            <span class="k">for</span> (SourceClass memberClass : memberClasses) {</pre>
<span class="m" style="left:425px;top:319px;width:25px;text-align:right;line-height:21px;font-size:12.600px;color:#aaaaaa;letter-spacing:-0.400px;">359</span>
<pre style="left:493px;top:317.5px;">                <span class="k">if</span> (ConfigurationClassUtils.<span class="i">isConfigurationCandidate</span>(memberClass.getMetadata()) &amp;&amp;</pre>
<span class="m" style="left:425px;top:340px;width:25px;text-align:right;line-height:21px;font-size:12.600px;color:#aaaaaa;letter-spacing:-0.400px;">360</span>
<pre style="left:493px;top:338.5px;">                        !<span class="u" style="color:#1a73c9">memberClass.getMetadata()</span>.getClassName().equals(configClass.getMetadata().getClassName())) {</pre>
<span class="m" style="left:425px;top:361px;width:25px;text-align:right;line-height:21px;font-size:12.600px;color:#aaaaaa;letter-spacing:-0.400px;">361</span>
<pre style="left:493px;top:359.5px;">                    candidates.add(memberClass);</pre>
<span class="m" style="left:425px;top:382px;width:25px;text-align:right;line-height:21px;font-size:12.600px;color:#aaaaaa;letter-spacing:-0.400px;">362</span>
<pre style="left:493px;top:380.5px;">                }</pre>
<span class="m" style="left:425px;top:403px;width:25px;text-align:right;line-height:21px;font-size:12.600px;color:#aaaaaa;letter-spacing:-0.400px;">363</span>
<pre style="left:493px;top:401.5px;">            }</pre>
<span class="m" style="left:425px;top:424px;width:25px;text-align:right;line-height:21px;font-size:12.600px;color:#aaaaaa;letter-spacing:-0.400px;">364</span>
<pre style="left:493px;top:422.5px;">            OrderComparator.<span class="i">sort</span>(candidates);</pre>
<span class="m" style="left:425px;top:445px;width:25px;text-align:right;line-height:21px;font-size:12.600px;color:#aaaaaa;letter-spacing:-0.400px;">365</span>
<pre style="left:493px;top:443.5px;">            <span class="k">for</span> (SourceClass candidate : candidates) {</pre>
<span class="m" style="left:425px;top:466px;width:25px;text-align:right;line-height:21px;font-size:12.600px;color:#aaaaaa;letter-spacing:-0.400px;">366</span>
<pre style="left:493px;top:464.5px;">                <span class="k">if</span> (<span class="k">this</span>.<span class="f">importStack</span>.contains(configClass)) {</pre>
<span class="m" style="left:425px;top:487px;width:25px;text-align:right;line-height:21px;font-size:12.600px;color:#aaaaaa;letter-spacing:-0.400px;">367</span>
<pre style="left:493px;top:485.5px;">                    <span class="k">this</span>.<span class="f">problemReporter</span>.error(<span class="k">new</span> CircularImportProblem(configClass, <span class="k">this</span>.<span class="f">importStack</span>));</pre>
<span class="m" style="left:425px;top:508px;width:25px;text-align:right;line-height:21px;font-size:12.600px;color:#aaaaaa;letter-spacing:-0.400px;">368</span>
<pre style="left:493px;top:506.5px;">                }</pre>
<span class="m" style="left:425px;top:529px;width:25px;text-align:right;line-height:21px;font-size:12.600px;color:#aaaaaa;letter-spacing:-0.400px;">369</span>
<pre style="left:493px;top:527.5px;">                <span class="k">else</span> {</pre>
<span class="m" style="left:425px;top:550px;width:25px;text-align:right;line-height:21px;font-size:12.600px;color:#aaaaaa;letter-spacing:-0.400px;">370</span>
<pre style="left:493px;top:548.5px;">                    <span class="k">this</span>.<span class="f">importStack</span>.push(configClass);</pre>
<span class="m" style="left:425px;top:571px;width:25px;text-align:right;line-height:21px;font-size:12.600px;color:#aaaaaa;letter-spacing:-0.400px;">371</span>
<pre style="left:493px;top:569.5px;">                    <span class="k">try</span> {</pre>
<span class="m" style="left:425px;top:592px;width:25px;text-align:right;line-height:21px;font-size:12.600px;color:#aaaaaa;letter-spacing:-0.400px;">372</span>
<pre style="left:493px;top:590.5px;">                        processConfigurationClass(candidate.asConfigClass(configClass), filter);</pre>
<span class="m" style="left:425px;top:613px;width:25px;text-align:right;line-height:21px;font-size:12.600px;color:#aaaaaa;letter-spacing:-0.400px;">373</span>
<pre style="left:493px;top:611.5px;">                    }</pre>
<span class="m" style="left:425px;top:634px;width:25px;text-align:right;line-height:21px;font-size:12.600px;color:#aaaaaa;letter-spacing:-0.400px;">374</span>
<pre style="left:493px;top:632.5px;">                    <span class="k">finally</span> {</pre>
<span class="m" style="left:425px;top:655px;width:25px;text-align:right;line-height:21px;font-size:12.600px;color:#aaaaaa;letter-spacing:-0.400px;">375</span>
<pre style="left:493px;top:653.5px;">                        <span class="k">this</span>.<span class="f">importStack</span>.pop();</pre>
<span class="m" style="left:425px;top:676px;width:25px;text-align:right;line-height:21px;font-size:12.600px;color:#aaaaaa;letter-spacing:-0.400px;">376</span>
<pre style="left:493px;top:674.5px;">                    }</pre>
<span class="m" style="left:425px;top:697px;width:25px;text-align:right;line-height:21px;font-size:12.600px;color:#aaaaaa;letter-spacing:-0.400px;">377</span>
<pre style="left:493px;top:695.5px;">                }</pre>
<svg style="left:459px;top:111px;" width="14" height="12" viewBox="0 0 14 12"><path d="M1.500 1v10" stroke="#a8afb5" stroke-width="1.400" fill="none"/><path d="M4.500 2.800h8M4.500 5.800h8M4.500 8.800h5" stroke="#b0b6bb" stroke-width="1.300" fill="none"/></svg>
<span style="left:460px;top:173.5px;line-height:14px;font-size:11.5px;color:#4d4d4d;">@</span>
<svg style="left:483px;top:114px;" width="9" height="10.5" viewBox="0 0 9 10.5"><path d="M0.500 0.500h8v6l-4 3.500l-4-3.500z" fill="#fff" stroke="#c8c8c8" stroke-width="1"/><path d="M2.500 4.500h4" stroke="#b0b0b0" stroke-width="1"/></svg>
<svg style="left:483px;top:198px;" width="9" height="10.5" viewBox="0 0 9 10.5"><path d="M0.500 0.500h8v6l-4 3.500l-4-3.500z" fill="#fff" stroke="#c8c8c8" stroke-width="1"/><path d="M2.500 4.500h4" stroke="#b0b0b0" stroke-width="1"/></svg>
<svg style="left:483px;top:261px;" width="9" height="10.5" viewBox="0 0 9 10.5"><path d="M0.500 0.500h8v6l-4 3.500l-4-3.500z" fill="#fff" stroke="#c8c8c8" stroke-width="1"/><path d="M2.500 4.500h4" stroke="#b0b0b0" stroke-width="1"/></svg>
<svg style="left:483px;top:303px;" width="9" height="10.5" viewBox="0 0 9 10.5"><path d="M0.500 0.500h8v6l-4 3.500l-4-3.500z" fill="#fff" stroke="#c8c8c8" stroke-width="1"/><path d="M2.500 4.500h4" stroke="#b0b0b0" stroke-width="1"/></svg>
<svg style="left:483px;top:345px;" width="9" height="10.5" viewBox="0 0 9 10.5"><path d="M0.500 0.500h8v6l-4 3.500l-4-3.500z" fill="#fff" stroke="#c8c8c8" stroke-width="1"/><path d="M2.500 4.500h4" stroke="#b0b0b0" stroke-width="1"/></svg>
<svg style="left:483px;top:450px;" width="9" height="10.5" viewBox="0 0 9 10.5"><path d="M0.500 0.500h8v6l-4 3.500l-4-3.500z" fill="#fff" stroke="#c8c8c8" stroke-width="1"/><path d="M2.500 4.500h4" stroke="#b0b0b0" stroke-width="1"/></svg>
<svg style="left:483px;top:471px;" width="9" height="10.5" viewBox="0 0 9 10.5"><path d="M0.500 0.500h8v6l-4 3.500l-4-3.500z" fill="#fff" stroke="#c8c8c8" stroke-width="1"/><path d="M2.500 4.500h4" stroke="#b0b0b0" stroke-width="1"/></svg>
<svg style="left:483px;top:534px;" width="9" height="10.5" viewBox="0 0 9 10.5"><path d="M0.500 0.500h8v6l-4 3.500l-4-3.500z" fill="#fff" stroke="#c8c8c8" stroke-width="1"/><path d="M2.500 4.500h4" stroke="#b0b0b0" stroke-width="1"/></svg>
<svg style="left:483px;top:576px;" width="9" height="10.5" viewBox="0 0 9 10.5"><path d="M0.500 0.500h8v6l-4 3.500l-4-3.500z" fill="#fff" stroke="#c8c8c8" stroke-width="1"/><path d="M2.500 4.500h4" stroke="#b0b0b0" stroke-width="1"/></svg>
<svg style="left:483px;top:639px;" width="9" height="10.5" viewBox="0 0 9 10.5"><path d="M0.500 0.500h8v6l-4 3.500l-4-3.500z" fill="#fff" stroke="#c8c8c8" stroke-width="1"/><path d="M2.500 4.500h4" stroke="#b0b0b0" stroke-width="1"/></svg>
<svg style="left:483px;top:154.5px;" width="9" height="10.5" viewBox="0 0 9 10.5"><path d="M0.500 10h8v-6l-4-3.500l-4 3.500z" fill="#fff" stroke="#c8c8c8" stroke-width="1"/><path d="M2.500 6h4" stroke="#b0b0b0" stroke-width="1"/></svg>
<svg style="left:483px;top:385.5px;" width="9" height="10.5" viewBox="0 0 9 10.5"><path d="M0.500 10h8v-6l-4-3.500l-4 3.500z" fill="#fff" stroke="#c8c8c8" stroke-width="1"/><path d="M2.500 6h4" stroke="#b0b0b0" stroke-width="1"/></svg>
<svg style="left:483px;top:406.5px;" width="9" height="10.5" viewBox="0 0 9 10.5"><path d="M0.500 10h8v-6l-4-3.500l-4 3.500z" fill="#fff" stroke="#c8c8c8" stroke-width="1"/><path d="M2.500 6h4" stroke="#b0b0b0" stroke-width="1"/></svg>
<svg style="left:483px;top:511.5px;" width="9" height="10.5" viewBox="0 0 9 10.5"><path d="M0.500 10h8v-6l-4-3.500l-4 3.500z" fill="#fff" stroke="#c8c8c8" stroke-width="1"/><path d="M2.500 6h4" stroke="#b0b0b0" stroke-width="1"/></svg>
<svg style="left:483px;top:616.5px;" width="9" height="10.5" viewBox="0 0 9 10.5"><path d="M0.500 10h8v-6l-4-3.500l-4 3.500z" fill="#fff" stroke="#c8c8c8" stroke-width="1"/><path d="M2.500 6h4" stroke="#b0b0b0" stroke-width="1"/></svg>
<svg style="left:483px;top:679.5px;" width="9" height="10.5" viewBox="0 0 9 10.5"><path d="M0.500 10h8v-6l-4-3.500l-4 3.500z" fill="#fff" stroke="#c8c8c8" stroke-width="1"/><path d="M2.500 6h4" stroke="#b0b0b0" stroke-width="1"/></svg>
<svg style="left:483px;top:700.5px;" width="9" height="10.5" viewBox="0 0 9 10.5"><path d="M0.500 10h8v-6l-4-3.500l-4 3.500z" fill="#fff" stroke="#c8c8c8" stroke-width="1"/><path d="M2.500 6h4" stroke="#b0b0b0" stroke-width="1"/></svg>
<div style="left:493px;top:710px;width:807px;height:9px;background:rgba(190,190,190,0.450);"></div>
<div style="left:501px;top:159px;width:939px;height:555px;border:3px solid #f2130d;border-radius:4px;box-sizing:border-box;"></div>
<svg style="left:1892px;top:86px;" width="14" height="12" viewBox="0 0 14 12"><path d="M2 6.500l3 3l6.500-7" stroke="#4aa14a" stroke-width="2.200" fill="none"/></svg>
<div style="left:1897px;top:254px;width:10px;height:35px;background:#e1e1e1;"></div>
<div style="left:1893px;top:212px;width:14px;height:2px;background:#d9a0e8;"></div>
<div style="left:1893px;top:215px;width:14px;height:2px;background:#2b59c3;"></div>
<div style="left:1893px;top:260px;width:14px;height:2px;background:#c9a0e0;"></div>
<div style="left:1893px;top:533px;width:14px;height:1px;background:#f4b8b8;"></div>
<div style="left:8px;top:719px;width:1899px;height:28px;background:#f2f2f2;"></div>
<div style="left:8px;top:719px;width:21px;height:279px;background:#f2f2f2;"></div>
<div style="left:29px;top:719px;width:1px;height:279px;background:#d1d1d1;"></div>
<div style="left:30px;top:719px;width:1877px;height:1px;background:#d1d1d1;"></div>
<div style="left:30px;top:746px;width:1877px;height:1px;background:#d1d1d1;"></div>
<span style="left:36.5px;top:724.5px;line-height:18px;color:#1a1a1a;letter-spacing:-0.357px;">Services</span>
<svg style="left:1827px;top:725px;" width="16" height="16" viewBox="0 0 16 16"><circle cx="8" cy="8" r="6" fill="none" stroke="#6e6e6e" stroke-width="1.300"/><path d="M8 1v4.500M8 10.500V15M1 8h4.500M10.500 8H15" stroke="#6e6e6e" stroke-width="1.300"/></svg>
<div style="left:1851px;top:725px;width:1px;height:16px;background:#cfcfcf;"></div>
<svg style="left:1861px;top:726px;" width="14" height="14" viewBox="0 0 16 16"><rect x="6.700" y="0.800" width="2.600" height="3.400" fill="#6e6e6e" transform="rotate(0 8 8)"/><rect x="6.700" y="0.800" width="2.600" height="3.400" fill="#6e6e6e" transform="rotate(45 8 8)"/><rect x="6.700" y="0.800" width="2.600" height="3.400" fill="#6e6e6e" transform="rotate(90 8 8)"/><rect x="6.700" y="0.800" width="2.600" height="3.400" fill="#6e6e6e" transform="rotate(135 8 8)"/><rect x="6.700" y="0.800" width="2.600" height="3.400" fill="#6e6e6e" transform="rotate(180 8 8)"/><rect x="6.700" y="0.800" width="2.600" height="3.400" fill="#6e6e6e" transform="rotate(225 8 8)"/><rect x="6.700" y="0.800" width="2.600" height="3.400" fill="#6e6e6e" transform="rotate(270 8 8)"/><rect x="6.700" y="0.800" width="2.600" height="3.400" fill="#6e6e6e" transform="rotate(315 8 8)"/><circle cx="8" cy="8" r="4.900" fill="#6e6e6e"/><circle cx="8" cy="8" r="2.100" fill="#f2f2f2"/></svg>
<svg style="left:1886px;top:725px;" width="16" height="16" viewBox="0 0 16 16"><path d="M2 8h11" stroke="#6e6e6e" stroke-width="1.500"/></svg>
<svg style="left:36px;top:754px;" width="16" height="16" viewBox="0 0 16 16"><path d="M12.500 8.500a5 5 0 1 1-2.500-4.800" stroke="#4aa14a" stroke-width="2" fill="none"/><path d="M8.500 0.500l4.500 3.200l-4.500 3.200z" fill="#4aa14a"/><rect x="10" y="10" width="5.500" height="5.500" fill="#5a5a5a"/></svg>
<svg style="left:36px;top:780px;" width="16" height="16" viewBox="0 0 16 16"><ellipse cx="8" cy="9" rx="4" ry="5" fill="#4aa14a"/><circle cx="8" cy="3.6" r="2.3" fill="#4aa14a"/><path d="M1.5 6l3 1.5M14.5 6l-3 1.5M1 9.5h3.5M15 9.5h-3.5M1.5 13.5l3-1.5M14.5 13.5l-3-1.5M5 1l1.5 1.8M11 1L9.5 2.8" stroke="#4aa14a" stroke-width="1.3" fill="none"/></svg>
<div style="left:47px;top:791px;width:5px;height:5px;background:#5a5a5a;"></div>
<div style="left:38px;top:808px;width:12px;height:12px;background:#db5860;"></div>
<div style="left:34px;top:830px;width:20px;height:1px;background:#cfcfcf;"></div>
<svg style="left:36px;top:838px;" width="16" height="16" viewBox="0 0 16 16"><rect x="1.500" y="2" width="3" height="12" fill="#4aa14a"/><path d="M6.500 2v12l8.500-6z" fill="#4aa14a"/></svg>
<svg style="left:36px;top:864px;" width="16" height="16" viewBox="0 0 16 16"><rect x="4" y="2.500" width="2.800" height="11" fill="#c4c4c4"/><rect x="9.200" y="2.500" width="2.800" height="11" fill="#c4c4c4"/></svg>
<div style="left:34px;top:889px;width:20px;height:1px;background:#cfcfcf;"></div>
<svg style="left:36px;top:898px;" width="16" height="16" viewBox="0 0 16 16"><circle cx="10" cy="5.500" r="4.500" fill="#db5860"/><circle cx="6" cy="10" r="5" fill="#db5860" stroke="#f2f2f2" stroke-width="1"/></svg>
<svg style="left:36px;top:924px;" width="16" height="16" viewBox="0 0 16 16"><circle cx="8" cy="8" r="5.500" fill="#db5860"/><path d="M1.500 14.500L14.500 1.500" stroke="#f2f2f2" stroke-width="3"/><path d="M1.500 14.500L14.500 1.500" stroke="#5a5a5a" stroke-width="1.200"/></svg>
<div style="left:34px;top:948px;width:20px;height:1px;background:#cfcfcf;"></div>
<svg style="left:36px;top:957px;" width="16" height="16" viewBox="0 0 16 16"><path d="M1 4.500h3.500l1-2h5l1 2H15V14H1z" fill="#5a5a5a"/><circle cx="8" cy="9" r="3" fill="#f2f2f2"/><circle cx="8" cy="9" r="1.700" fill="#5a5a5a"/></svg>
<span style="left:40px;top:979.5px;line-height:14px;color:#6e6e6e;">»</span>
<svg style="left:64px;top:752px;" width="16" height="16" viewBox="0 0 16 16"><path d="M2 2.500h12M2 14h12" stroke="#5a5a5a" stroke-width="1.500"/><path d="M4.500 8h7L8 4.500zM4.500 9.500h7L8 13z" fill="#5a5a5a"/></svg>
<svg style="left:90px;top:752px;" width="16" height="16" viewBox="0 0 16 16"><path d="M2 8.200h12" stroke="#5a5a5a" stroke-width="1.500"/><path d="M4.500 2.500h7L8 6zM4.500 14h7L8 10.500z" fill="#5a5a5a"/></svg>
<div style="left:114px;top:752px;width:1px;height:16px;background:#cfcfcf;"></div>
<svg style="left:123px;top:752px;" width="18" height="18" viewBox="0 0 18 18"><rect x="1.500" y="2" width="4" height="4" fill="#5a5a5a"/><rect x="7.500" y="2" width="4" height="4" fill="#5a5a5a"/><rect x="1.500" y="8" width="4" height="4" fill="#5a5a5a"/><rect x="7.500" y="8" width="4" height="4" fill="#5a5a5a"/><path d="M9.500 13.500h5L12 16z" fill="#5a5a5a"/></svg>
<svg style="left:150px;top:752px;" width="18" height="18" viewBox="0 0 18 18"><path d="M1 2h12.500L9 8v6.500L5.500 12V8z" fill="#5a5a5a"/><path d="M11 13.500h5L13.500 16z" fill="#5a5a5a"/></svg>
<svg style="left:175px;top:752px;" width="16" height="16" viewBox="0 0 16 16"><path d="M1.500 13V2.500h13V13" stroke="#5a5a5a" stroke-width="1.300" fill="none"/><path d="M8 5v7M4.500 8.500h7" stroke="#5a5a5a" stroke-width="1.300"/></svg>
<div style="left:199px;top:752px;width:1px;height:16px;background:#cfcfcf;"></div>
<svg style="left:209px;top:752px;" width="18" height="18" viewBox="0 0 18 18"><path d="M6.500 2v10M1.500 7h10" stroke="#5a5a5a" stroke-width="1.600"/><path d="M10 13.500h5L12.500 16z" fill="#5a5a5a"/></svg>
<div style="left:59px;top:816px;width:296px;height:20px;background:#d5d5d5;"></div>
<svg style="left:60.0px;top:780.5px;" width="12" height="10" viewBox="0 0 12 10"><path d="M1 1.500h10L6 9z" fill="#9e9e9e"/></svg>
<svg style="left:80px;top:778px;" width="16" height="16" viewBox="0 0 16 16"><path d="M1 9.5C1.5 5 6 3.2 12.5 2.2C13.2 6.5 12 11.5 7 12C4.5 12.2 2.5 11.5 1 9.5z" fill="#6cb35a"/><path d="M2 10.5C5 9.5 8 7.5 10.5 4.5" stroke="#fff" stroke-width="0.8" fill="none" opacity="0.7"/><circle cx="11" cy="11.5" r="4" fill="#f2f2f2" stroke="#7f8b91" stroke-width="1"/><circle cx="11" cy="11.5" r="1.6" fill="none" stroke="#7f8b91" stroke-width="0.9"/></svg>
<span style="left:98.5px;top:777px;line-height:18px;letter-spacing:0.188px;">Spring Boot</span>
<svg style="left:78.0px;top:800.5px;" width="12" height="10" viewBox="0 0 12 10"><path d="M1 1.500h10L6 9z" fill="#9e9e9e"/></svg>
<svg style="left:100px;top:798px;" width="12" height="16" viewBox="0 0 12 16"><path d="M1 1.500v13l10-6.500z" fill="#4aa14a"/></svg>
<span style="left:116px;top:797px;line-height:18px;letter-spacing:-0.205px;">Running</span>
<svg style="left:115px;top:818px;" width="16" height="16" viewBox="0 0 16 16"><path d="M8 1.500v3.500" stroke="#8a8a8a" stroke-width="1.500" opacity="0.30" transform="rotate(0 8 8)"/><path d="M8 1.500v3.500" stroke="#8a8a8a" stroke-width="1.500" opacity="0.39" transform="rotate(45 8 8)"/><path d="M8 1.500v3.500" stroke="#8a8a8a" stroke-width="1.500" opacity="0.48" transform="rotate(90 8 8)"/><path d="M8 1.500v3.500" stroke="#8a8a8a" stroke-width="1.500" opacity="0.57" transform="rotate(135 8 8)"/><path d="M8 1.500v3.500" stroke="#8a8a8a" stroke-width="1.500" opacity="0.66" transform="rotate(180 8 8)"/><path d="M8 1.500v3.500" stroke="#8a8a8a" stroke-width="1.500" opacity="0.75" transform="rotate(225 8 8)"/><path d="M8 1.500v3.500" stroke="#8a8a8a" stroke-width="1.500" opacity="0.84" transform="rotate(270 8 8)"/><path d="M8 1.500v3.500" stroke="#8a8a8a" stroke-width="1.500" opacity="0.93" transform="rotate(315 8 8)"/></svg>
<span class="b" style="left:134.5px;top:817px;line-height:18px;letter-spacing:0.064px;">DemoBootApplication-test</span>
<svg style="left:78.0px;top:840.5px;" width="12" height="10" viewBox="0 0 12 10"><path d="M1 1.500h10L6 9z" fill="#9e9e9e"/></svg>
<svg style="left:98px;top:838px;" width="16" height="16" viewBox="0 0 16 16"><path d="M12.500 8.500a5 5 0 1 1-2.500-4.800" stroke="#4aa14a" stroke-width="2" fill="none"/><path d="M8.500 0.500l4.500 3.200l-4.500 3.200z" fill="#4aa14a"/><rect x="10" y="10" width="5.500" height="5.500" fill="#5a5a5a"/></svg>
<span style="left:116px;top:837px;line-height:18px;letter-spacing:-0.268px;">Finished</span>
<svg style="left:115px;top:858px;" width="16" height="16" viewBox="0 0 16 16"><path d="M1 9.5C1.5 5 6 3.2 12.5 2.2C13.2 6.5 12 11.5 7 12C4.5 12.2 2.5 11.5 1 9.5z" fill="#6cb35a"/><path d="M2 10.5C5 9.5 8 7.5 10.5 4.5" stroke="#fff" stroke-width="0.8" fill="none" opacity="0.7"/><circle cx="11" cy="11.5" r="4" fill="#f2f2f2" stroke="#7f8b91" stroke-width="1"/><circle cx="11" cy="11.5" r="1.6" fill="none" stroke="#7f8b91" stroke-width="0.9"/></svg>
<span class="b" style="left:134.5px;top:857px;line-height:18px;letter-spacing:0.064px;">DemoBootApplication-test</span>
<span class="b" style="left:134.5px;top:877px;line-height:18px;color:#8a8a8a;letter-spacing:0.026px;">DemoBootApplication</span>
<span style="left:369px;top:751.5px;line-height:18px;font-size:12px;letter-spacing:0.035px;">Debugger</span>
<div style="left:356px;top:773px;width:78px;height:2px;background:#8f9db5;"></div>
<svg style="left:446px;top:754px;" width="18" height="16" viewBox="0 0 18 16"><rect x="1.500" y="2" width="11.500" height="10" fill="#6e6e6e"/><path d="M4 4.500l3 2.500l-3 2.500" stroke="#f2f2f2" stroke-width="1.300" fill="none"/><circle cx="12" cy="11.500" r="3.600" fill="#f0a732"/><path d="M12 9.300v4M10.300 11.800l1.700 1.700l1.700-1.700" stroke="#5a5a5a" stroke-width="0.900" fill="none"/></svg>
<span style="left:465px;top:751.5px;line-height:18px;font-size:12px;letter-spacing:-0.147px;">Console</span>
<svg style="left:526px;top:752px;" width="16" height="18" viewBox="0 0 16 18"><path d="M3 14L8 4.500L12.500 13" stroke="#f49a6a" stroke-width="1.100" fill="none"/><circle cx="8" cy="4.500" r="2.300" fill="#f49a6a"/><circle cx="3" cy="14" r="2.300" fill="#f49a6a"/><circle cx="12.500" cy="13.500" r="2.300" fill="#f49a6a"/></svg>
<span style="left:547px;top:751.5px;line-height:18px;font-size:12px;letter-spacing:0.069px;">Endpoints</span>
<svg style="left:613px;top:753px;" width="16" height="16" viewBox="0 0 16 16"><path d="M1.500 3.500h13M1.500 8h13" stroke="#3d8ed6" stroke-width="2"/><path d="M1.500 12.500h13" stroke="#5a5a5a" stroke-width="2"/></svg>
<div style="left:637px;top:752px;width:1px;height:16px;background:#cfcfcf;"></div>
<svg style="left:645px;top:752px;" width="17" height="17" viewBox="0 0 17 17"><path d="M2 9.500C3.500 4 10 3.500 12.500 8" stroke="#3a86cf" stroke-width="1.600" fill="none"/><path d="M13.800 3.500v5.300h-5.300z" fill="#3a86cf"/><path d="M2 14h13" stroke="#5a5a5a" stroke-width="1.600"/></svg>
<svg style="left:672px;top:752px;" width="16" height="17" viewBox="0 0 16 17"><path d="M8 1v9" stroke="#3a86cf" stroke-width="1.700"/><path d="M3.800 6.500L8 11l4.200-4.500z" fill="#3a86cf"/><path d="M2 14h12" stroke="#5a5a5a" stroke-width="1.600"/></svg>
<svg style="left:698px;top:752px;" width="16" height="17" viewBox="0 0 16 17"><path d="M8 1v9" stroke="#e0434f" stroke-width="1.700"/><path d="M3.800 6.500L8 11l4.200-4.500z" fill="#e0434f"/><path d="M2 14h12" stroke="#5a5a5a" stroke-width="1.600"/></svg>
<svg style="left:724px;top:752px;" width="16" height="17" viewBox="0 0 16 17"><path d="M8 11.500V3" stroke="#3a86cf" stroke-width="1.700"/><path d="M3.800 6L8 1.500L12.200 6z" fill="#3a86cf"/><path d="M2 14h12" stroke="#5a5a5a" stroke-width="1.600"/></svg>
<svg style="left:750px;top:752px;" width="17" height="17" viewBox="0 0 17 17"><path d="M6 6h8v8H6z" stroke="#5a5a5a" stroke-width="1.400" fill="none"/><path d="M1.500 1.500l5 5M6.500 1.500l-5 5" stroke="#e0434f" stroke-width="1.600"/></svg>
<svg style="left:776px;top:752px;" width="18" height="17" viewBox="0 0 18 17"><path d="M1.500 2L8 8.500" stroke="#3a86cf" stroke-width="1.700"/><path d="M9.500 4.500v5.500H4z" fill="#3a86cf"/><path d="M11 7.500h4M13 7.500v8M11 15.500h4" stroke="#5a5a5a" stroke-width="1.100" fill="none"/></svg>
<div style="left:800px;top:752px;width:1px;height:16px;background:#cfcfcf;"></div>
<svg style="left:810px;top:754px;" width="14" height="14" viewBox="0 0 14 14"><rect x="1" y="1" width="12" height="12" fill="none" stroke="#5a5a5a" stroke-width="1.600"/><path d="M1 4.500h12M1 8.500h12M5 4.500v8.500M9 4.500v8.500" stroke="#5a5a5a" stroke-width="1.200"/><rect x="1" y="1" width="12" height="3.500" fill="#5a5a5a"/></svg>
<svg style="left:835px;top:752px;" width="16" height="16" viewBox="0 0 16 16"><path d="M1.500 4h5l3 8h5M1.500 12h5l3-8h5M1.500 8h13" stroke="#c9c9c9" stroke-width="1.300" fill="none"/></svg>
<svg style="left:1885px;top:753px;" width="18" height="18" viewBox="0 0 18 18"><rect x="1.500" y="2" width="13" height="4" fill="#5a5a5a"/><rect x="1.500" y="7.500" width="6" height="5" fill="#5a5a5a"/><rect x="8.500" y="7.500" width="6" height="5" fill="#5a5a5a"/><path d="M11 14h5l-2.500 2.500z" fill="#5a5a5a"/></svg>
<span style="left:369px;top:779px;line-height:18px;font-size:12px;letter-spacing:-0.445px;">Frames</span>
<div style="left:356px;top:800px;width:63px;height:2px;background:#8f9db5;"></div>
<span style="left:431px;top:779px;line-height:18px;font-size:12px;letter-spacing:-0.290px;">Threads</span>
<div style="left:359px;top:805px;width:427px;height:24px;background:#fff;border:1px solid #c4c4c4;border-radius:3px;box-sizing:border-box;"></div>
<svg style="left:366px;top:810px;" width="16" height="14" viewBox="0 0 16 14"><path d="M2 7l4 4.500L14 2" stroke="#f08a52" stroke-width="2.800" fill="none"/></svg>
<span style="left:385.5px;top:808.5px;line-height:18px;letter-spacing:0.065px;">"main"@1 in group "main": RUNNING</span>
<svg style="left:769px;top:813px;" width="10" height="8" viewBox="0 0 10 8"><path d="M0.500 1.500h9L5 7z" fill="#5a5a5a"/></svg>
<svg style="left:796px;top:809px;" width="16" height="16" viewBox="0 0 16 16"><path d="M8 14V3M3.800 7L8 2.500L12.200 7" stroke="#c4c4c4" stroke-width="1.500" fill="none"/></svg>
<svg style="left:822px;top:809px;" width="16" height="16" viewBox="0 0 16 16"><path d="M8 2v11M3.800 9L8 13.500L12.200 9" stroke="#5a5a5a" stroke-width="1.500" fill="none"/></svg>
<svg style="left:848px;top:809px;" width="16" height="16" viewBox="0 0 16 16"><path d="M1.500 2.500h13L9.500 8.500v6L6.500 12.500v-4z" fill="#5a5a5a"/></svg>
<div style="left:356px;top:834px;width:515px;height:21px;background:#2675bf;"></div>
<span style="left:372px;top:835.5px;line-height:18px;color:#fff;letter-spacing:-0.077px;">doProcessConfigurationClass:276, ConfigurationClassParser</span>
<span class="i" style="left:724px;top:835.5px;line-height:18px;color:#fff;letter-spacing:0.225px;">(org.springframework.context.annotation)</span>
<span style="left:372px;top:856.5px;line-height:18px;color:#8a8a8a;letter-spacing:-0.064px;">processConfigurationClass:250, ConfigurationClassParser</span>
<span class="i" style="left:709px;top:856.5px;line-height:18px;color:#8a8a8a;letter-spacing:0.225px;">(org.springframework.context.annotation)</span>
<span style="left:372px;top:877.5px;line-height:18px;color:#8a8a8a;letter-spacing:-0.062px;">parse:207, ConfigurationClassParser</span>
<span class="i" style="left:586.5px;top:877.5px;line-height:18px;color:#8a8a8a;letter-spacing:0.162px;">(org.springframework.context.annotation)</span>
<span style="left:372px;top:898.5px;line-height:18px;color:#8a8a8a;letter-spacing:-0.062px;">parse:175, ConfigurationClassParser</span>
<span class="i" style="left:586.5px;top:898.5px;line-height:18px;color:#8a8a8a;letter-spacing:0.162px;">(org.springframework.context.annotation)</span>
<span style="left:372px;top:919.5px;line-height:18px;color:#8a8a8a;letter-spacing:-0.055px;">processConfigBeanDefinitions:331, ConfigurationClassPostProcessor</span>
<span class="i" style="left:774px;top:919.5px;line-height:18px;color:#8a8a8a;letter-spacing:0.225px;">(org.springframework.context.annotation)</span>
<span style="left:372px;top:940.5px;line-height:18px;color:#8a8a8a;letter-spacing:-0.074px;">postProcessBeanDefinitionRegistry:247, ConfigurationClassPostProcessor</span>
<span class="i" style="left:802px;top:940.5px;line-height:18px;color:#8a8a8a;letter-spacing:0.225px;">(org.springframework.context.annotation)</span>
<span style="left:372px;top:961.5px;line-height:18px;color:#8a8a8a;letter-spacing:-0.047px;">invokeBeanDefinitionRegistryPostProcessors:311, PostProcessorRegistrationDelegate</span>
<span class="i" style="left:871px;top:961.5px;line-height:18px;color:#8a8a8a;letter-spacing:0.307px;">(org.springframework.context.support)</span>
<span style="left:372px;top:982.5px;line-height:18px;color:#8a8a8a;letter-spacing:-0.083px;">invokeBeanFactoryPostProcessors:112, PostProcessorRegistrationDelegate</span>
<span class="i" style="left:810.5px;top:982.5px;line-height:18px;color:#8a8a8a;letter-spacing:0.307px;">(org.springframework.context.support)</span>
<div style="left:871px;top:775px;width:1036px;height:27px;background:#f2f2f2;"></div>
<div style="left:356px;top:801px;width:1551px;height:1px;background:#d1d1d1;"></div>
<div style="left:356px;top:800px;width:63px;height:2px;background:#8f9db5;"></div>
<div style="left:871px;top:802px;width:27px;height:195px;background:#f2f2f2;"></div>
<div style="left:898px;top:802px;width:960px;height:195px;background:#fff;"></div>
<div style="left:871px;top:775px;width:1px;height:222px;background:#d1d1d1;"></div>
<div style="left:897px;top:802px;width:1px;height:195px;background:#e3e3e3;"></div>
<div style="left:861px;top:834px;width:10px;height:71px;background:rgba(160,160,160,0.350);"></div>
<div style="left:356px;top:987px;width:339px;height:10px;background:rgba(150,150,150,0.350);"></div>
<span style="left:885px;top:779px;line-height:18px;font-size:12px;letter-spacing:-0.127px;">Variables</span>
<svg style="left:876px;top:807px;" width="16" height="16" viewBox="0 0 16 16"><path d="M8 2.500v11M2.500 8h11" stroke="#5a5a5a" stroke-width="1.600"/></svg>
<svg style="left:876px;top:832px;" width="16" height="16" viewBox="0 0 16 16"><path d="M3 8h10" stroke="#c4c4c4" stroke-width="1.500"/></svg>
<svg style="left:876px;top:859px;" width="16" height="16" viewBox="0 0 16 16"><path d="M2.500 11.500h11L8 5z" fill="#c9c9c9"/></svg>
<svg style="left:876px;top:884px;" width="16" height="16" viewBox="0 0 16 16"><path d="M2.500 4.500h11L8 11z" fill="#c9c9c9"/></svg>
<svg style="left:876px;top:910px;" width="16" height="16" viewBox="0 0 16 16"><path d="M2.500 2.500h8v2M4.500 5.500h9v9h-9z" stroke="#c4c4c4" stroke-width="1.300" fill="none"/><path d="M6.500 8.500h5M6.500 11h5" stroke="#c4c4c4" stroke-width="1.100"/></svg>
<div style="left:873px;top:934px;width:22px;height:22px;background:#d2d2d2;border-radius:3px;"></div>
<svg style="left:876px;top:940px;" width="16" height="10" viewBox="0 0 16 10"><circle cx="4" cy="5.500" r="2.800" fill="none" stroke="#5a5a5a" stroke-width="1.500"/><circle cx="12" cy="5.500" r="2.800" fill="none" stroke="#5a5a5a" stroke-width="1.500"/><path d="M6.800 4.500h2.400M0.500 4h1M14.500 4h1" stroke="#5a5a5a" stroke-width="1.300"/></svg>
<svg style="left:899px;top:806.5px;" width="10" height="12" viewBox="0 0 10 12"><path d="M1 1l7.500 5L1 11z" fill="#9e9e9e"/></svg>
<svg style="left:917px;top:804.5px;" width="16" height="16" viewBox="0 0 16 16"><path d="M2.500 3h11M2.500 6.300h11M2.500 9.700h11M2.500 13h11" stroke="#f0a848" stroke-width="2"/></svg>
<span style="left:936px;top:803.5px;line-height:18px;color:#8b1a10;letter-spacing:0.066px;">this</span>
<span style="left:960.5px;top:803.5px;line-height:18px;letter-spacing:0.406px;">=</span>
<span style="left:973.5px;top:803.5px;line-height:18px;color:#8a8a8a;letter-spacing:-0.159px;">{ConfigurationClassParser@4036}</span>
<svg style="left:899px;top:826.5px;" width="10" height="12" viewBox="0 0 10 12"><path d="M1 1l7.500 5L1 11z" fill="#9e9e9e"/></svg>
<svg style="left:917px;top:824.5px;" width="16" height="16" viewBox="0 0 16 16"><circle cx="8" cy="8" r="7" fill="#f6bc6a"/><text x="8" y="11.300" font-family="Liberation Sans,sans-serif" font-size="10" text-anchor="middle" fill="#7a4a10">p</text></svg>
<span style="left:936px;top:823.5px;line-height:18px;color:#8b1a10;letter-spacing:-0.109px;">configClass</span>
<span style="left:1007px;top:823.5px;line-height:18px;letter-spacing:0.406px;">=</span>
<span style="left:1019.5px;top:823.5px;line-height:18px;color:#8a8a8a;letter-spacing:-0.146px;">{ConfigurationClass@4058}</span>
<span style="left:1181px;top:823.5px;line-height:18px;letter-spacing:0.142px;">"ConfigurationClass: beanName 'demoBootApplication', org.hopehomi.boot.DemoBootApplication"</span>
<svg style="left:899px;top:846.5px;" width="10" height="12" viewBox="0 0 10 12"><path d="M1 1l7.500 5L1 11z" fill="#9e9e9e"/></svg>
<svg style="left:917px;top:844.5px;" width="16" height="16" viewBox="0 0 16 16"><circle cx="8" cy="8" r="7" fill="#f6bc6a"/><text x="8" y="11.300" font-family="Liberation Sans,sans-serif" font-size="10" text-anchor="middle" fill="#7a4a10">p</text></svg>
<span style="left:936px;top:843.5px;line-height:18px;color:#8b1a10;letter-spacing:-0.230px;">sourceClass</span>
<span style="left:1009.5px;top:843.5px;line-height:18px;letter-spacing:0.406px;">=</span>
<span style="left:1022.5px;top:843.5px;line-height:18px;color:#8a8a8a;letter-spacing:-0.194px;">{ConfigurationClassParser$SourceClass@4059}</span>
<span style="left:1298px;top:843.5px;line-height:18px;letter-spacing:0.211px;">"org.hopehomi.boot.DemoBootApplication"</span>
<svg style="left:899px;top:866.5px;" width="10" height="12" viewBox="0 0 10 12"><path d="M1 1l7.500 5L1 11z" fill="#9e9e9e"/></svg>
<svg style="left:917px;top:864.5px;" width="16" height="16" viewBox="0 0 16 16"><circle cx="8" cy="8" r="7" fill="#f6bc6a"/><text x="8" y="11.300" font-family="Liberation Sans,sans-serif" font-size="10" text-anchor="middle" fill="#7a4a10">p</text></svg>
<span style="left:936px;top:863.5px;line-height:18px;color:#8b1a10;letter-spacing:0.323px;">filter</span>
<span style="left:966.5px;top:863.5px;line-height:18px;letter-spacing:0.406px;">=</span>
<span style="left:979px;top:863.5px;line-height:18px;color:#8a8a8a;letter-spacing:-0.087px;">{ConfigurationClassParser$lambda@4060}</span>
<svg style="left:899px;top:886.5px;" width="10" height="12" viewBox="0 0 10 12"><path d="M1 1l7.500 5L1 11z" fill="#9e9e9e"/></svg>
<svg style="left:917px;top:887.5px;" width="16" height="10" viewBox="0 0 16 10"><circle cx="4" cy="5.500" r="2.800" fill="none" stroke="#8a9aa5" stroke-width="1.500"/><circle cx="12" cy="5.500" r="2.800" fill="none" stroke="#8a9aa5" stroke-width="1.500"/><path d="M6.800 4.500h2.400M0.500 4h1M14.500 4h1" stroke="#8a9aa5" stroke-width="1.300"/></svg>
<span style="left:936px;top:883.5px;line-height:18px;color:#8b1a10;letter-spacing:0.560px;">logger</span>
<span style="left:979.5px;top:883.5px;line-height:18px;letter-spacing:0.406px;">=</span>
<span style="left:992.5px;top:883.5px;line-height:18px;color:#8a8a8a;letter-spacing:-0.064px;">{LogAdapter$Slf4jLocationAwareLog@4061}</span>
<svg style="left:899px;top:906.5px;" width="10" height="12" viewBox="0 0 10 12"><path d="M1 1l7.500 5L1 11z" fill="#9e9e9e"/></svg>
<svg style="left:917px;top:907.5px;" width="16" height="10" viewBox="0 0 16 10"><circle cx="4" cy="5.500" r="2.800" fill="none" stroke="#8a9aa5" stroke-width="1.500"/><circle cx="12" cy="5.500" r="2.800" fill="none" stroke="#8a9aa5" stroke-width="1.500"/><path d="M6.800 4.500h2.400M0.500 4h1M14.500 4h1" stroke="#8a9aa5" stroke-width="1.300"/></svg>
<span style="left:936px;top:903.5px;line-height:18px;color:#8b1a10;letter-spacing:0.007px;">this.environment</span>
<span style="left:1035.5px;top:903.5px;line-height:18px;letter-spacing:0.406px;">=</span>
<span style="left:1048px;top:903.5px;line-height:18px;color:#8a8a8a;letter-spacing:-0.079px;">{ApplicationServletEnvironment@3397}</span>
<span style="left:1277px;top:903.5px;line-height:18px;letter-spacing:0.080px;">"ApplicationServletEnvironment {activeProfiles=[test], defaultProfiles=[default], propertySour</span>
<span style="left:1812px;top:903.5px;line-height:18px;color:#8a8a8a;letter-spacing:0.052px;">...</span>
<span style="left:1828px;top:903.5px;line-height:18px;color:#5b9bd8;letter-spacing:0.012px;">View</span>
<div style="left:898px;top:987px;width:235px;height:10px;background:rgba(150,150,150,0.300);"></div>
<div style="left:1858px;top:775px;width:49px;height:222px;background:#fff;"></div>
<div style="left:1858px;top:775px;width:49px;height:27px;background:#f2f2f2;"></div>
<div style="left:1858px;top:775px;width:1px;height:222px;background:#d1d1d1;"></div>
<div style="left:1858px;top:801px;width:49px;height:1px;background:#d1d1d1;"></div>
<span style="left:1870px;top:779px;line-height:18px;font-size:12px;">M</span>
<div style="left:1878px;top:776px;width:10px;height:25px;background:#f2f2f2;"></div>
<div style="left:1859px;top:800px;width:20px;height:2px;background:#8f9db5;"></div>
<svg style="left:1887px;top:783px;" width="12" height="10" viewBox="0 0 12 10"><path d="M1.500 2.500L6 7l4.500-4.500" stroke="#6e6e6e" stroke-width="1.400" fill="none"/></svg>
<div style="left:1859px;top:802px;width:48px;height:31px;background:#f2f2f2;"></div>
<div style="left:1862px;top:805px;width:13px;height:23px;background:#fff;border:1px solid #c4c4c4;border-right:none;border-radius:3px 0 0 3px;box-sizing:border-box;"></div>
<span style="left:1869px;top:807.5px;line-height:18px;font-size:12px;color:#b0b0b0;">C</span>
<div style="left:1875px;top:803px;width:7px;height:30px;background:#f2f2f2;"></div>
<svg style="left:1886px;top:809px;" width="14" height="14" viewBox="0 0 16 16"><rect x="6.700" y="0.800" width="2.600" height="3.400" fill="#5a5a5a" transform="rotate(0 8 8)"/><rect x="6.700" y="0.800" width="2.600" height="3.400" fill="#5a5a5a" transform="rotate(45 8 8)"/><rect x="6.700" y="0.800" width="2.600" height="3.400" fill="#5a5a5a" transform="rotate(90 8 8)"/><rect x="6.700" y="0.800" width="2.600" height="3.400" fill="#5a5a5a" transform="rotate(135 8 8)"/><rect x="6.700" y="0.800" width="2.600" height="3.400" fill="#5a5a5a" transform="rotate(180 8 8)"/><rect x="6.700" y="0.800" width="2.600" height="3.400" fill="#5a5a5a" transform="rotate(225 8 8)"/><rect x="6.700" y="0.800" width="2.600" height="3.400" fill="#5a5a5a" transform="rotate(270 8 8)"/><rect x="6.700" y="0.800" width="2.600" height="3.400" fill="#5a5a5a" transform="rotate(315 8 8)"/><circle cx="8" cy="8" r="4.900" fill="#5a5a5a"/><circle cx="8" cy="8" r="2.100" fill="#f2f2f2"/></svg>
<div style="left:1859px;top:833px;width:48px;height:23px;background:#fff;"></div>
<div style="left:1859px;top:856px;width:48px;height:1px;background:#e3e3e3;"></div>
<span style="left:1867px;top:835px;line-height:18px;letter-spacing:-0.617px;">..</span>
<div style="left:1873px;top:834px;width:1px;height:22px;background:#d8d8d8;"></div>
<span style="left:1882px;top:835px;line-height:18px;letter-spacing:-0.020px;">Coun</span>
<span style="left:1858px;top:897.5px;line-height:18px;color:#8a8a8a;letter-spacing:-0.339px;">oaded. </span>
<span style="left:1901px;top:897.5px;line-height:18px;color:#5b9bd8;">L</span>
<div style="left:1907px;top:58px;width:21px;height:940px;background:#f2f2f2;"></div>
<div style="left:1907px;top:58px;width:1px;height:940px;background:#d1d1d1;"></div>
<div style="left:8px;top:997px;width:1920px;height:43px;background:#f2f2f2;"></div>
<div style="left:8px;top:997px;width:1920px;height:1px;background:#d1d1d1;"></div>
<div style="left:8px;top:1019px;width:1920px;height:1px;background:#d1d1d1;"></div>
<span style="left:11.5px;top:117px;line-height:18px;font-size:12px;transform-origin:0 0;transform:rotate(-90deg);color:#1a1a1a;letter-spacing:-0.070px;"><span class="u">1</span>: Project</span>
<svg style="left:13px;top:121px;" width="12" height="12" viewBox="0 0 12 12"><path d="M0.500 1.500h4l1.200 1.800H11.500v7.700H0.500z" fill="#5a5a5a" transform="rotate(-90 6 6)"/></svg>
<span style="left:11.5px;top:216px;line-height:18px;font-size:12px;transform-origin:0 0;transform:rotate(-90deg);color:#1a1a1a;"><span class="u">7</span>: Structure</span>
<svg style="left:14px;top:218px;" width="12" height="12" viewBox="0 0 12 12"><rect x="7" y="1" width="4" height="4" fill="#5a5a5a"/><rect x="1" y="6.500" width="4" height="4" fill="#5a5a5a"/><rect x="7" y="6.500" width="4" height="4" fill="#5a5a5a"/></svg>
<span style="left:11.5px;top:910px;line-height:18px;font-size:12px;transform-origin:0 0;transform:rotate(-90deg);color:#1a1a1a;letter-spacing:-0.225px;"><span class="u">2</span>: Favorites</span>
<svg style="left:12px;top:912px;" width="14" height="14" viewBox="0 0 14 14"><path d="M7 0.800l1.900 4.200l4.500 0.500l-3.400 3l1 4.500L7 10.700L3 13l1-4.500l-3.400-3l4.500-0.500z" fill="#5a5a5a"/></svg>
<span style="left:11.5px;top:970px;line-height:18px;font-size:12px;transform-origin:0 0;transform:rotate(-90deg);color:#1a1a1a;letter-spacing:-0.156px;">Web</span>
<svg style="left:12px;top:973px;" width="14" height="14" viewBox="0 0 14 14"><circle cx="7" cy="7" r="5.800" fill="none" stroke="#5a5a5a" stroke-width="1.400"/><path d="M2.500 4.500c2 1 3 2.500 2 4.500s1 3 2 3.500M8 1.500c-1 2 1.500 2.500 3.500 2.500" stroke="#5a5a5a" stroke-width="1.300" fill="none"/></svg>
<svg style="left:0px;top:196px;" width="8" height="64" viewBox="0 0 8 64"><path d="M0 3.500h4v9H0M0 6h3M0 27h4v9H0" stroke="#5a5a5a" stroke-width="1.300" fill="none"/><path d="M0 51.500c3-1.500 4.500 1 4.500 3.500s-2 4-4.500 3.500" stroke="#5a5a5a" stroke-width="1.300" fill="none"/></svg>
<svg style="left:0px;top:975px;" width="8" height="45" viewBox="0 0 8 45"><path d="M0 8l4 3l-4 3M0 24l3 2l-3 2M0 30l3 2l-3 2" stroke="#5a5a5a" stroke-width="1.300" fill="none"/><path d="M0 38h4v7H0" stroke="#3a3a3a" stroke-width="1.300" fill="none"/></svg>
<span class="b i" style="left:1911px;top:61px;line-height:18px;font-size:18px;color:#6e6e6e;letter-spacing:-1px;">m</span>
<span style="left:1927px;top:85px;line-height:18px;font-size:12px;transform-origin:0 0;transform:rotate(90deg);color:#1a1a1a;letter-spacing:0.194px;">Maven</span>
<svg style="left:1911px;top:139px;" width="14" height="14" viewBox="0 0 14 14"><ellipse cx="7" cy="8.500" rx="2.500" ry="4" fill="#6e6e6e"/><circle cx="7" cy="3.500" r="1.800" fill="#6e6e6e"/><path d="M1.500 3l3.500 3.500M12.500 3L9 6.500M1 8.500h4M13 8.500H9M1.500 13.500L5 10.500M12.500 13.500L9 10.500" stroke="#6e6e6e" stroke-width="1.100" fill="none"/></svg>
<span style="left:1927px;top:156px;line-height:18px;font-size:12px;transform-origin:0 0;transform:rotate(90deg);color:#1a1a1a;letter-spacing:0.661px;">Ant</span>
<svg style="left:1911px;top:193px;" width="14" height="15" viewBox="0 0 14 15"><ellipse cx="7" cy="3.500" rx="5.500" ry="2.500" fill="#6e6e6e"/><path d="M1.500 5.500v2c0 1.400 2.500 2.500 5.500 2.500s5.500-1.100 5.500-2.500v-2c0 1.400-2.500 2.500-5.500 2.500S1.500 6.900 1.500 5.500zM1.500 9.500v2c0 1.400 2.500 2.500 5.500 2.500s5.500-1.100 5.500-2.500v-2c0 1.400-2.500 2.500-5.500 2.500S1.500 10.900 1.500 9.500z" fill="#6e6e6e"/></svg>
<span style="left:1927px;top:213px;line-height:18px;font-size:12px;transform-origin:0 0;transform:rotate(90deg);color:#1a1a1a;letter-spacing:-0.297px;">Database</span>
<svg style="left:1911px;top:280px;" width="14" height="13" viewBox="0 0 14 13"><path d="M1 2h2M4.500 2h9M1 6.500h2M4.500 6.500h9M1 11h2M4.500 11h9" stroke="#6e6e6e" stroke-width="2"/><path d="M7 0.500v12M10.500 0.500v12" stroke="#f2f2f2" stroke-width="0.800"/></svg>
<span style="left:1927px;top:298px;line-height:18px;font-size:12px;transform-origin:0 0;transform:rotate(90deg);color:#1a1a1a;letter-spacing:-0.210px;">SciView</span>
<span style="left:1927px;top:358px;line-height:18px;font-size:12px;transform-origin:0 0;transform:rotate(90deg);color:#1a1a1a;letter-spacing:-0.391px;">RestServices</span>
<div style="left:1918px;top:217px;width:14px;height:58px;background:#3c4046;border-radius:4px;"></div>
<svg style="left:1922px;top:222px;" width="8" height="48" viewBox="0 0 8 48"><path d="M0.500 1.5h7" stroke="#6a7078" stroke-width="1.100"/><path d="M0.500 3.7h7" stroke="#6a7078" stroke-width="1.100"/><path d="M0.500 5.9h7" stroke="#6a7078" stroke-width="1.100"/><path d="M0.500 8.1h7" stroke="#6a7078" stroke-width="1.100"/><path d="M0.500 10.3h7" stroke="#6a7078" stroke-width="1.100"/><path d="M0.500 12.5h7" stroke="#d6b04a" stroke-width="1.100"/><path d="M0.500 14.7h7" stroke="#d6b04a" stroke-width="1.100"/><path d="M0.500 16.9h7" stroke="#d6b04a" stroke-width="1.100"/><path d="M0.500 19.1h7" stroke="#d6b04a" stroke-width="1.100"/><path d="M0.500 21.3h7" stroke="#9bc25a" stroke-width="1.100"/><path d="M0.500 23.5h7" stroke="#9bc25a" stroke-width="1.100"/><path d="M0.500 25.7h7" stroke="#9bc25a" stroke-width="1.100"/><path d="M0.500 27.9h7" stroke="#9bc25a" stroke-width="1.100"/><path d="M0.500 30.1h7" stroke="#53c3b0" stroke-width="1.100"/><path d="M0.500 32.3h7" stroke="#53c3b0" stroke-width="1.100"/><path d="M0.500 34.5h7" stroke="#53c3b0" stroke-width="1.100"/><path d="M0.500 36.7h7" stroke="#53c3b0" stroke-width="1.100"/><path d="M0.500 38.9h7" stroke="#53c3b0" stroke-width="1.100"/><path d="M0.500 41.1h7" stroke="#53c3b0" stroke-width="1.100"/><path d="M0.500 43.3h7" stroke="#53c3b0" stroke-width="1.100"/><path d="M0.500 45.5h7" stroke="#53c3b0" stroke-width="1.100"/></svg>
<div style="left:463px;top:998px;width:93px;height:21px;background:#d0d0d0;"></div>
<svg style="left:38.0px;top:1002.5px;" width="14" height="14" viewBox="0 0 14 14"><path d="M3 1.500v11M3 9.500c5 0 7-1.500 7-5" stroke="#5a5a5a" stroke-width="1.500" fill="none"/><path d="M7.500 5.500L10 2.500l2.500 3z" fill="#5a5a5a"/></svg>
<span style="left:56px;top:1000.5px;line-height:18px;font-size:12px;color:#1a1a1a;letter-spacing:-0.117px;"><span class="u">9</span>: Git</span>
<svg style="left:100.0px;top:1002.5px;" width="14" height="14" viewBox="0 0 14 14"><path d="M2.500 1.500v11l9.500-5.500z" fill="#5a5a5a"/></svg>
<span style="left:119px;top:1000.5px;line-height:18px;font-size:12px;color:#1a1a1a;letter-spacing:-0.229px;"><span class="u">4</span>: Run</span>
<svg style="left:172.0px;top:1002.5px;" width="14" height="14" viewBox="0 0 14 14"><path d="M1 2.500h2M4.500 2.500h8.500M1 7h2M4.500 7h8.500M1 11.500h2M4.500 11.500h8.500" stroke="#5a5a5a" stroke-width="1.600"/></svg>
<span style="left:190px;top:1000.5px;line-height:18px;font-size:12px;color:#1a1a1a;letter-spacing:-0.371px;"><span class="u">6</span>: TODO</span>
<svg style="left:254.0px;top:1002.5px;" width="14" height="14" viewBox="0 0 14 14"><ellipse cx="7" cy="8" rx="3.600" ry="4.600" fill="#5a5a5a"/><circle cx="7" cy="3" r="2" fill="#5a5a5a"/><path d="M1 5.500l3 1.500M13 5.500l-3 1.500M0.500 8.500h3.500M13.500 8.500H10M1 12.500l3-1.500M13 12.500l-3-1.500" stroke="#5a5a5a" stroke-width="1.200"/></svg>
<span style="left:272.5px;top:1000.5px;line-height:18px;font-size:12px;color:#1a1a1a;letter-spacing:-0.215px;"><span class="u">5</span>: Debug</span>
<svg style="left:338.0px;top:1002.5px;" width="14" height="14" viewBox="0 0 14 14"><g transform="rotate(-45 7 7)"><rect x="2" y="1.500" width="9" height="4" rx="0.700" fill="#5a5a5a"/><rect x="5.600" y="5.500" width="2" height="8.500" fill="#5a5a5a"/></g></svg>
<span style="left:356px;top:1000.5px;line-height:18px;font-size:12px;color:#1a1a1a;letter-spacing:0.263px;">Build</span>
<svg style="left:402.0px;top:1002.5px;" width="14" height="14" viewBox="0 0 14 14"><path d="M1 8.500C1.500 4.500 5.500 3 12 2C12.700 6 11.500 11 6.500 11.500C4 11.700 2.300 10.800 1 8.500z" fill="#5a5a5a"/><path d="M2 10C4.500 9.500 7.500 7.500 10 4.500" stroke="#f2f2f2" stroke-width="0.800" fill="none"/></svg>
<span style="left:420px;top:1000.5px;line-height:18px;font-size:12px;color:#1a1a1a;letter-spacing:-0.031px;">Spring</span>
<svg style="left:474.0px;top:1002.5px;" width="14" height="14" viewBox="0 0 14 14"><circle cx="6.500" cy="6.500" r="4.300" fill="none" stroke="#5a5a5a" stroke-width="2.200"/><path d="M5.500 4v5l4-2.500z" fill="#5a5a5a"/><circle cx="11" cy="11.500" r="2.400" fill="#3bb54a"/></svg>
<span style="left:492px;top:1000.5px;line-height:18px;font-size:12px;color:#1a1a1a;letter-spacing:-0.398px;"><span class="u">8</span>: Services</span>
<svg style="left:566.0px;top:1002.5px;" width="14" height="14" viewBox="0 0 14 14"><rect x="0.500" y="1.500" width="13" height="11" fill="#5a5a5a"/><path d="M3 4.500l3 2.500l-3 2.500M7 10h4" stroke="#f2f2f2" stroke-width="1.300" fill="none"/></svg>
<span style="left:584px;top:1000.5px;line-height:18px;font-size:12px;color:#1a1a1a;letter-spacing:0.080px;">Terminal</span>
<svg style="left:650.0px;top:1002.5px;" width="14" height="14" viewBox="0 0 14 14"><rect x="1" y="1.500" width="12" height="11" fill="none" stroke="#5a5a5a" stroke-width="1.400"/><path d="M1 5h12" stroke="#5a5a5a" stroke-width="1.400"/><rect x="5" y="7" width="8" height="6.500" fill="#5a5a5a"/><path d="M6.500 9h5M6.500 11.500h5" stroke="#f2f2f2" stroke-width="0.900"/></svg>
<span style="left:668px;top:1000.5px;line-height:18px;font-size:12px;color:#1a1a1a;letter-spacing:-0.358px;">Java Enterprise</span>
<svg style="left:1827px;top:1003px;" width="14" height="14" viewBox="0 0 14 14"><circle cx="7" cy="7" r="6.500" fill="#4caf6a"/><text x="7" y="10.300" font-family="Liberation Sans,sans-serif" font-size="9" font-weight="bold" text-anchor="middle" fill="#fff">6</text></svg>
<span style="left:1845px;top:1000.5px;line-height:18px;font-size:12px;color:#1a1a1a;letter-spacing:-0.116px;">Event Log</span>
<svg style="left:13px;top:1023px;" width="14" height="13" viewBox="0 0 14 13"><rect x="1.500" y="3" width="9" height="9" fill="none" stroke="#6e6e6e" stroke-width="1.200"/><path d="M4 3V1h9.500v9H11" stroke="#6e6e6e" stroke-width="1.200" fill="none"/></svg>
<span style="left:35px;top:1020.5px;line-height:18px;color:#1a1a1a;letter-spacing:-0.017px;">IntelliJ IDEA 2020.1.4 available: // Update... (today 9:53)</span>
<span style="left:1625px;top:1020.5px;line-height:18px;color:#1a1a1a;letter-spacing:-0.128px;">352:18</span>
<span style="left:1675px;top:1020.5px;line-height:18px;color:#8a8a8a;letter-spacing:-1.086px;">LF</span>
<span style="left:1699px;top:1020.5px;line-height:18px;color:#8a8a8a;letter-spacing:-0.369px;">UTF-8</span>
<span style="left:1745px;top:1020.5px;line-height:18px;color:#8a8a8a;letter-spacing:-0.006px;">4 spaces</span>
<svg style="left:1807px;top:1023px;" width="12" height="14" viewBox="0 0 12 14"><circle cx="3" cy="3" r="1.800" fill="none" stroke="#6e6e6e" stroke-width="1.200"/><circle cx="3" cy="11.500" r="1.800" fill="none" stroke="#6e6e6e" stroke-width="1.200"/><circle cx="9.500" cy="4.500" r="1.800" fill="none" stroke="#6e6e6e" stroke-width="1.200"/><path d="M3 4.800v5M9.500 6.300c0 2.500-6.500 1.500-6.500 3.500" stroke="#6e6e6e" stroke-width="1.200" fill="none"/></svg>
<span style="left:1825px;top:1020.5px;line-height:18px;color:#1a1a1a;letter-spacing:0.344px;">dev</span>
<svg style="left:1856px;top:1022px;" width="14" height="14" viewBox="0 0 14 14"><path d="M3 7V5a4 4 0 0 1 7.500-1.500" stroke="#8a8a8a" stroke-width="1.500" fill="none"/><rect x="1.500" y="7" width="10" height="6.500" fill="#8a8a8a"/></svg>
<svg style="left:1880px;top:1022px;" width="14" height="14" viewBox="0 0 14 14"><path d="M2 6c0-3 2-4.500 5-4.500S12 3 12 6v2H2z" fill="#8a8a8a"/><rect x="0.500" y="7.500" width="13" height="2" fill="#8a8a8a"/><path d="M3 10.500c1 3 7 3 8 0" stroke="#8a8a8a" stroke-width="1.300" fill="none"/></svg>
<svg style="left:1903px;top:1022px;" width="14" height="14" viewBox="0 0 14 14"><circle cx="7" cy="7" r="6" fill="#c9c9c9"/><text x="7" y="10.500" font-family="Liberation Sans,sans-serif" font-size="10" text-anchor="middle" fill="#fff">?</text></svg>
<span style="left:1805px;top:1025px;line-height:18px;font-size:13.5px;color:rgba(120,120,120,0.750);letter-spacing:-0.287px;">CSDN @Eadison7</span>
<div style="left:0px;top:1040px;width:1928px;height:8px;background:#1c1c1c;"></div>
<div style="left:255px;top:1040px;width:50px;height:8px;background:#3a3a3a;"></div>
<div style="left:0px;top:1020px;width:8px;height:28px;background:#2b2b2b;"></div>
<div style="left:1923px;top:1040px;width:1px;height:8px;background:#5a5a5a;"></div>
<span style="left:1824px;top:1044px;line-height:14px;font-size:12px;color:#fff;letter-spacing:0.194px;">15:07</span>
</div></body></html>
